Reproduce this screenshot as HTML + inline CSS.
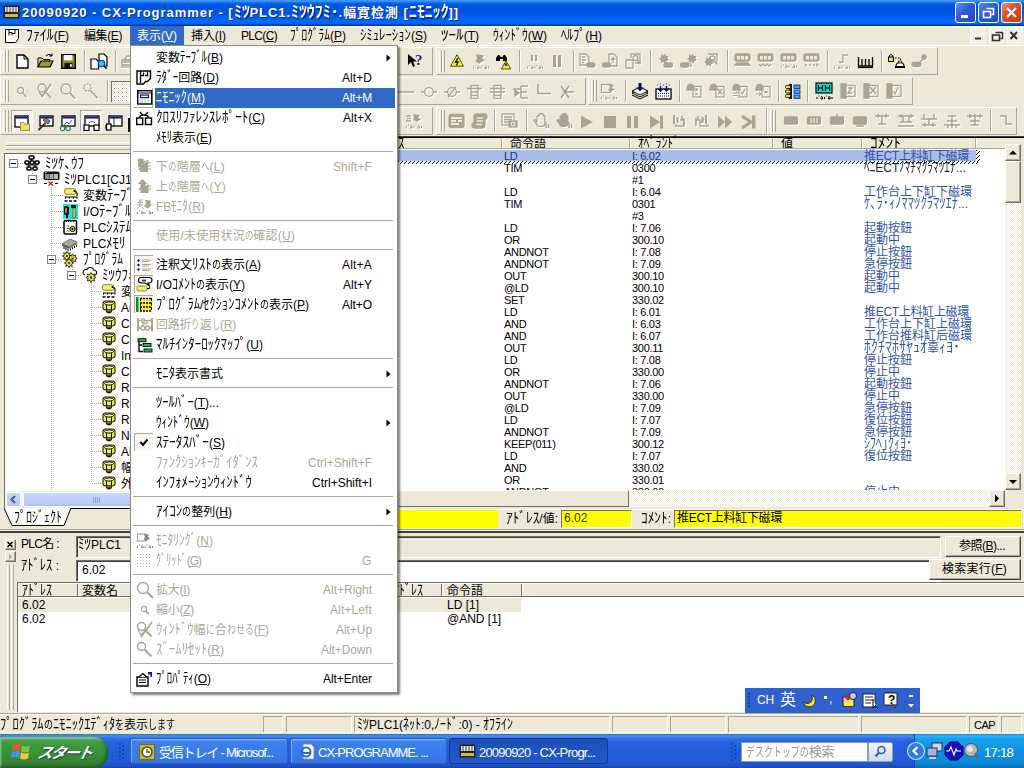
<!DOCTYPE html>
<html lang="ja"><head><meta charset="utf-8"><title>CX-Programmer</title><style>
html,body{margin:0;padding:0;}
body{width:1024px;height:768px;overflow:hidden;background:#ECE9D8;position:relative;font-family:"Liberation Sans","Noto Sans CJK JP",sans-serif;font-size:12px;color:#000;}
div,span.t,svg{position:absolute;}
span.t{white-space:nowrap;}
span.k{display:inline-block;transform-origin:0 0;letter-spacing:0;}
span.h{display:inline-block;transform-origin:0 70%;letter-spacing:0;}
u{text-decoration:underline;text-underline-offset:1px;}
</style></head><body>
<div style="left:0px;top:0px;width:1024px;height:26px;background:linear-gradient(to bottom,#3E96FF 0%,#3a92ff 5%,#1D74EE 9%,#0A5FE2 13%,#0055E0 20%,#0056E4 50%,#0159EA 60%,#0361F7 72%,#0468FB 82%,#0566F6 90%,#0350D8 94%,#0039B0 97%,#002E9C 100%);"></div>
<span id="t0" class="t" style="left:22px;top:5px;font-size:13px;line-height:15px;color:#fff;font-weight:bold;letter-spacing:0.95px;text-shadow:1px 1px 0 #0a2a8a;">20090920 - CX-Programmer - [<span class="h" style="transform:scale(1.220,1.22);margin-right:2.86px">ﾐﾂ</span>PLC1.<span class="h" style="transform:scale(1.220,1.22);margin-right:8.58px">ﾐﾂｳﾌﾐ･</span>.幅寛检測 [<span class="h" style="transform:scale(1.220,1.22);margin-right:7.15px">ﾆﾓﾆｯｸ</span>]]</span>
<svg style="left:3px;top:4px;" width="17" height="17" viewBox="0 0 17 17"><rect x="0.5" y="1.5" width="16" height="13" rx="1" fill="#222"/><rect x="2" y="3" width="13" height="5" fill="#e8e8e8"/><rect x="2" y="10" width="13" height="3" fill="#c8c040"/><path d="M4 3v5M7 3v5M10 3v5M13 3v5" stroke="#444"/></svg>
<div style="left:955px;top:2px;width:19px;height:19px;background:linear-gradient(135deg,#5a8cf0 0%,#2e5cd8 45%,#2348c0 100%);border:1px solid #fff;border-radius:3px;"></div>
<div style="left:978px;top:2px;width:19px;height:19px;background:linear-gradient(135deg,#5a8cf0 0%,#2e5cd8 45%,#2348c0 100%);border:1px solid #fff;border-radius:3px;"></div>
<div style="left:1001px;top:2px;width:19px;height:19px;background:linear-gradient(135deg,#e9956f 0%,#d8532a 40%,#c63a12 100%);border:1px solid #fff;border-radius:3px;"></div>
<div style="left:961px;top:15px;width:7px;height:3px;background:#fff;"></div>
<svg style="left:978px;top:2px;" width="21" height="21" viewBox="0 0 21 21"><path d="M8.5 6.5h7v6h-2" fill="none" stroke="#fff" stroke-width="1.6"/><rect x="5.5" y="9.5" width="7" height="6" fill="none" stroke="#fff" stroke-width="1.6"/></svg>
<svg style="left:1001px;top:2px;" width="21" height="21" viewBox="0 0 21 21"><path d="M6 6l9 9M15 6l-9 9" stroke="#fff" stroke-width="2.2"/></svg>
<div style="left:0px;top:26px;width:1024px;height:20px;background:#ECE9D8;"></div>
<div style="left:0px;top:26px;width:1024px;height:1px;background:#fff;"></div>
<div style="left:0px;top:45px;width:1024px;height:1px;background:#fff;"></div>
<svg style="left:4px;top:28px;" width="16" height="16" viewBox="0 0 16 16"><path d="M1.5 1.5h13v9l-3 4h-10z" fill="#fff" stroke="#000"/><path d="M5 1.5v6M5 4.5h3v3M11 1.5v4h-3" fill="none" stroke="#000"/></svg>
<div style="left:130px;top:26px;width:54px;height:19px;background:#316AC5;"></div>
<span id="t1" class="t" style="left:26px;top:29px;font-size:12px;line-height:14px;"><span class="h" style="transform:scale(1.152,1.22);margin-right:3.65px">ﾌｧｲﾙ</span>(<u>F</u>)</span>
<span id="t2" class="t" style="left:84px;top:29px;font-size:12px;line-height:14px;letter-spacing:-0.40px;">編集(<u>E</u>)</span>
<span id="t3" class="t" style="left:137px;top:29px;font-size:12px;line-height:14px;color:#fff;">表示(<u>V</u>)</span>
<span id="t4" class="t" style="left:191px;top:29px;font-size:12px;line-height:14px;letter-spacing:-0.07px;">挿入(<u>I</u>)</span>
<span id="t5" class="t" style="left:241px;top:29px;font-size:12px;line-height:14px;letter-spacing:-0.67px;">PLC(<u>C</u>)</span>
<span id="t6" class="t" style="left:290px;top:29px;font-size:12px;line-height:14px;"><span class="h" style="transform:scale(0.952,1.22);margin-right:-2.02px">ﾌﾟﾛｸﾞﾗﾑ</span>(<u>P</u>)</span>
<span id="t7" class="t" style="left:360px;top:29px;font-size:12px;line-height:14px;"><span class="h" style="transform:scale(1.062,1.22);margin-right:2.98px">ｼﾐｭﾚｰｼｮﾝ</span>(<u>S</u>)</span>
<span id="t8" class="t" style="left:441px;top:29px;font-size:12px;line-height:14px;"><span class="h" style="transform:scale(1.258,1.22);margin-right:4.64px">ﾂｰﾙ</span>(<u>T</u>)</span>
<span id="t9" class="t" style="left:493px;top:29px;font-size:12px;line-height:14px;"><span class="h" style="transform:scale(0.963,1.22);margin-right:-1.33px">ｳｨﾝﾄﾞｳ</span>(<u>W</u>)</span>
<span id="t10" class="t" style="left:561px;top:29px;font-size:12px;line-height:14px;"><span class="h" style="transform:scale(1.013,1.22);margin-right:0.31px">ﾍﾙﾌﾟ</span>(<u>H</u>)</span>
<div style="left:970px;top:27px;width:16px;height:17px;background:#F3F1E7;border-top:1px solid #fbfaf6;border-left:1px solid #fbfaf6;box-sizing:border-box;"></div>
<div style="left:989px;top:27px;width:16px;height:17px;background:#F3F1E7;border-top:1px solid #fbfaf6;border-left:1px solid #fbfaf6;box-sizing:border-box;"></div>
<div style="left:1007px;top:27px;width:16px;height:17px;background:#F3F1E7;border-top:1px solid #fbfaf6;border-left:1px solid #fbfaf6;box-sizing:border-box;"></div>
<svg style="left:968px;top:27px;" width="56" height="18" viewBox="0 0 56 18"><path d="M7 11.5h6" stroke="#333" stroke-width="2"/><path d="M27.500 5.500h7v6h-2" fill="none" stroke="#333" stroke-width="1.4"/><rect x="24.500" y="8" width="7" height="5.500" fill="none" stroke="#333" stroke-width="1.6"/><path d="M42.500 5l6.500 7M49 5l-6.500 7" stroke="#333" stroke-width="2"/></svg>
<div style="left:0px;top:46px;width:1024px;height:90px;background:#ECE9D8;"></div>
<div style="left:0px;top:47px;width:433px;height:28px;border-top:1px solid #fff;border-left:1px solid #fff;border-bottom:1px solid #ACA899;border-right:1px solid #ACA899;box-sizing:border-box;"></div>
<div style="left:3px;top:50px;width:3px;height:22px;border-left:1px solid #fff;border-right:1px solid #ACA899;box-sizing:border-box;"></div>
<div style="left:6px;top:50px;width:3px;height:22px;border-left:1px solid #fff;border-right:1px solid #ACA899;box-sizing:border-box;"></div>
<div style="left:436px;top:47px;width:502px;height:28px;border-top:1px solid #fff;border-left:1px solid #fff;border-bottom:1px solid #ACA899;border-right:1px solid #ACA899;box-sizing:border-box;"></div>
<div style="left:439px;top:50px;width:3px;height:22px;border-left:1px solid #fff;border-right:1px solid #ACA899;box-sizing:border-box;"></div>
<div style="left:442px;top:50px;width:3px;height:22px;border-left:1px solid #fff;border-right:1px solid #ACA899;box-sizing:border-box;"></div>
<div style="left:0px;top:77px;width:586px;height:28px;border-top:1px solid #fff;border-left:1px solid #fff;border-bottom:1px solid #ACA899;border-right:1px solid #ACA899;box-sizing:border-box;"></div>
<div style="left:3px;top:80px;width:3px;height:22px;border-left:1px solid #fff;border-right:1px solid #ACA899;box-sizing:border-box;"></div>
<div style="left:6px;top:80px;width:3px;height:22px;border-left:1px solid #fff;border-right:1px solid #ACA899;box-sizing:border-box;"></div>
<div style="left:588px;top:77px;width:325px;height:28px;border-top:1px solid #fff;border-left:1px solid #fff;border-bottom:1px solid #ACA899;border-right:1px solid #ACA899;box-sizing:border-box;"></div>
<div style="left:591px;top:80px;width:3px;height:22px;border-left:1px solid #fff;border-right:1px solid #ACA899;box-sizing:border-box;"></div>
<div style="left:594px;top:80px;width:3px;height:22px;border-left:1px solid #fff;border-right:1px solid #ACA899;box-sizing:border-box;"></div>
<div style="left:0px;top:107px;width:433px;height:28px;border-top:1px solid #fff;border-left:1px solid #fff;border-bottom:1px solid #ACA899;border-right:1px solid #ACA899;box-sizing:border-box;"></div>
<div style="left:3px;top:110px;width:3px;height:22px;border-left:1px solid #fff;border-right:1px solid #ACA899;box-sizing:border-box;"></div>
<div style="left:6px;top:110px;width:3px;height:22px;border-left:1px solid #fff;border-right:1px solid #ACA899;box-sizing:border-box;"></div>
<div style="left:436px;top:107px;width:331px;height:28px;border-top:1px solid #fff;border-left:1px solid #fff;border-bottom:1px solid #ACA899;border-right:1px solid #ACA899;box-sizing:border-box;"></div>
<div style="left:439px;top:110px;width:3px;height:22px;border-left:1px solid #fff;border-right:1px solid #ACA899;box-sizing:border-box;"></div>
<div style="left:442px;top:110px;width:3px;height:22px;border-left:1px solid #fff;border-right:1px solid #ACA899;box-sizing:border-box;"></div>
<div style="left:767px;top:107px;width:250px;height:28px;border-top:1px solid #fff;border-left:1px solid #fff;border-bottom:1px solid #ACA899;border-right:1px solid #ACA899;box-sizing:border-box;"></div>
<div style="left:770px;top:110px;width:3px;height:22px;border-left:1px solid #fff;border-right:1px solid #ACA899;box-sizing:border-box;"></div>
<div style="left:773px;top:110px;width:3px;height:22px;border-left:1px solid #fff;border-right:1px solid #ACA899;box-sizing:border-box;"></div>
<div style="left:0px;top:136px;width:400px;height:397px;background:#ECE9D8;"></div>
<div style="left:6px;top:142px;width:392px;height:2px;border-top:1px solid #fff;border-bottom:1px solid #ACA899;"></div>
<div style="left:6px;top:146px;width:392px;height:2px;border-top:1px solid #fff;border-bottom:1px solid #ACA899;"></div>
<div style="left:4px;top:153px;width:396px;height:355px;background:#fff;border-top:1px solid #716F64;border-left:1px solid #716F64;box-sizing:border-box;"></div>
<div style="left:32px;top:171px;width:1px;height:8px;background:repeating-linear-gradient(to bottom,#aaa 0 1px,transparent 1px 2px);"></div>
<div style="left:51px;top:187px;width:1px;height:68px;background:repeating-linear-gradient(to bottom,#aaa 0 1px,transparent 1px 2px);"></div>
<div style="left:51px;top:265px;width:1px;height:225px;background:repeating-linear-gradient(to bottom,#aaa 0 1px,transparent 1px 2px);"></div>
<div style="left:72px;top:267px;width:1px;height:8px;background:repeating-linear-gradient(to bottom,#aaa 0 1px,transparent 1px 2px);"></div>
<div style="left:91px;top:283px;width:1px;height:200px;background:repeating-linear-gradient(to bottom,#aaa 0 1px,transparent 1px 2px);"></div>
<div style="left:9px;top:159px;width:9px;height:9px;background:#fff;border:1px solid #848484;box-sizing:border-box;"></div>
<div style="left:11px;top:163px;width:5px;height:1px;background:#000;"></div>
<div style="left:18px;top:163px;width:6px;height:1px;background:repeating-linear-gradient(to right,#aaa 0 1px,transparent 1px 2px);"></div>
<div style="left:28px;top:175px;width:9px;height:9px;background:#fff;border:1px solid #848484;box-sizing:border-box;"></div>
<div style="left:30px;top:179px;width:5px;height:1px;background:#000;"></div>
<div style="left:37px;top:179px;width:6px;height:1px;background:repeating-linear-gradient(to right,#aaa 0 1px,transparent 1px 2px);"></div>
<div style="left:47px;top:255px;width:9px;height:9px;background:#fff;border:1px solid #848484;box-sizing:border-box;"></div>
<div style="left:49px;top:259px;width:5px;height:1px;background:#000;"></div>
<div style="left:56px;top:259px;width:6px;height:1px;background:repeating-linear-gradient(to right,#aaa 0 1px,transparent 1px 2px);"></div>
<div style="left:67px;top:271px;width:9px;height:9px;background:#fff;border:1px solid #848484;box-sizing:border-box;"></div>
<div style="left:69px;top:275px;width:5px;height:1px;background:#000;"></div>
<div style="left:76px;top:275px;width:6px;height:1px;background:repeating-linear-gradient(to right,#aaa 0 1px,transparent 1px 2px);"></div>
<div style="left:52px;top:195px;width:11px;height:1px;background:repeating-linear-gradient(to right,#aaa 0 1px,transparent 1px 2px);"></div>
<div style="left:52px;top:211px;width:11px;height:1px;background:repeating-linear-gradient(to right,#aaa 0 1px,transparent 1px 2px);"></div>
<div style="left:52px;top:227px;width:11px;height:1px;background:repeating-linear-gradient(to right,#aaa 0 1px,transparent 1px 2px);"></div>
<div style="left:52px;top:243px;width:11px;height:1px;background:repeating-linear-gradient(to right,#aaa 0 1px,transparent 1px 2px);"></div>
<div style="left:92px;top:291px;width:9px;height:1px;background:repeating-linear-gradient(to right,#aaa 0 1px,transparent 1px 2px);"></div>
<div style="left:92px;top:307px;width:9px;height:1px;background:repeating-linear-gradient(to right,#aaa 0 1px,transparent 1px 2px);"></div>
<div style="left:92px;top:323px;width:9px;height:1px;background:repeating-linear-gradient(to right,#aaa 0 1px,transparent 1px 2px);"></div>
<div style="left:92px;top:339px;width:9px;height:1px;background:repeating-linear-gradient(to right,#aaa 0 1px,transparent 1px 2px);"></div>
<div style="left:92px;top:355px;width:9px;height:1px;background:repeating-linear-gradient(to right,#aaa 0 1px,transparent 1px 2px);"></div>
<div style="left:92px;top:371px;width:9px;height:1px;background:repeating-linear-gradient(to right,#aaa 0 1px,transparent 1px 2px);"></div>
<div style="left:92px;top:387px;width:9px;height:1px;background:repeating-linear-gradient(to right,#aaa 0 1px,transparent 1px 2px);"></div>
<div style="left:92px;top:403px;width:9px;height:1px;background:repeating-linear-gradient(to right,#aaa 0 1px,transparent 1px 2px);"></div>
<div style="left:92px;top:419px;width:9px;height:1px;background:repeating-linear-gradient(to right,#aaa 0 1px,transparent 1px 2px);"></div>
<div style="left:92px;top:435px;width:9px;height:1px;background:repeating-linear-gradient(to right,#aaa 0 1px,transparent 1px 2px);"></div>
<div style="left:92px;top:451px;width:9px;height:1px;background:repeating-linear-gradient(to right,#aaa 0 1px,transparent 1px 2px);"></div>
<div style="left:92px;top:467px;width:9px;height:1px;background:repeating-linear-gradient(to right,#aaa 0 1px,transparent 1px 2px);"></div>
<div style="left:92px;top:483px;width:9px;height:1px;background:repeating-linear-gradient(to right,#aaa 0 1px,transparent 1px 2px);"></div>
<span id="t11" class="t" style="left:45px;top:157px;font-size:12px;line-height:14px;"><span class="h" style="transform:scale(1.080,1.22);margin-right:2.88px">ﾐﾂｹ､ｳﾌ</span></span>
<span id="t12" class="t" style="left:64px;top:173px;font-size:12px;line-height:14px;"><span class="h" style="transform:scale(1.080,1.22);margin-right:0.96px">ﾐﾂ</span>PLC1[CJ1M] <span class="h" style="transform:scale(1.080,1.22);margin-right:2.40px">ｵﾌﾗｲﾝ</span></span>
<span id="t13" class="t" style="left:83px;top:189px;font-size:12px;line-height:14px;">変数<span class="h" style="transform:scale(1.080,1.22);margin-right:2.40px">ﾃｰﾌﾞﾙ</span></span>
<span id="t14" class="t" style="left:83px;top:205px;font-size:12px;line-height:14px;">I/O<span class="h" style="transform:scale(1.080,1.22);margin-right:2.40px">ﾃｰﾌﾞﾙ</span></span>
<span id="t15" class="t" style="left:83px;top:221px;font-size:12px;line-height:14px;">PLC<span class="h" style="transform:scale(1.080,1.22);margin-right:1.92px">ｼｽﾃﾑ</span>設定</span>
<span id="t16" class="t" style="left:83px;top:237px;font-size:12px;line-height:14px;">PLC<span class="h" style="transform:scale(1.080,1.22);margin-right:1.44px">ﾒﾓﾘ</span></span>
<span id="t17" class="t" style="left:83px;top:253px;font-size:12px;line-height:14px;"><span class="h" style="transform:scale(0.952,1.22);margin-right:-2.02px">ﾌﾟﾛｸﾞﾗﾑ</span></span>
<span id="t18" class="t" style="left:102px;top:269px;font-size:12px;line-height:14px;"><span class="h" style="transform:scale(1.080,1.22);margin-right:2.88px">ﾐﾂｳﾌﾐ･</span></span>
<span id="t19" class="t" style="left:121px;top:285px;font-size:12px;line-height:14px;">変数<span class="h" style="transform:scale(1.080,1.22);margin-right:2.40px">ﾃｰﾌﾞﾙ</span></span>
<span id="t20" class="t" style="left:121px;top:301px;font-size:12px;line-height:14px;">Auto</span>
<span id="t21" class="t" style="left:121px;top:317px;font-size:12px;line-height:14px;">Cal</span>
<span id="t22" class="t" style="left:121px;top:333px;font-size:12px;line-height:14px;">Chk</span>
<span id="t23" class="t" style="left:121px;top:349px;font-size:12px;line-height:14px;">Init</span>
<span id="t24" class="t" style="left:121px;top:365px;font-size:12px;line-height:14px;">Clr</span>
<span id="t25" class="t" style="left:121px;top:381px;font-size:12px;line-height:14px;">Run1</span>
<span id="t26" class="t" style="left:121px;top:397px;font-size:12px;line-height:14px;">Run2</span>
<span id="t27" class="t" style="left:121px;top:413px;font-size:12px;line-height:14px;">Rst</span>
<span id="t28" class="t" style="left:121px;top:429px;font-size:12px;line-height:14px;">NG</span>
<span id="t29" class="t" style="left:121px;top:445px;font-size:12px;line-height:14px;">Alarm</span>
<span id="t30" class="t" style="left:121px;top:461px;font-size:12px;line-height:14px;">幅寛检測</span>
<span id="t31" class="t" style="left:121px;top:477px;font-size:12px;line-height:14px;">外部</span>
<div style="left:5px;top:491px;width:395px;height:17px;background:#F3F1EC;"></div>
<div style="left:6px;top:492px;width:15px;height:15px;background:linear-gradient(#c8d6fb,#b4c8f6);border:1px solid #fff;border-radius:2px;box-sizing:border-box;"></div>
<svg style="left:6px;top:492px;" width="15" height="15" viewBox="0 0 15 15"><path d="M9 4L5.500 7.500L9 11" fill="none" stroke="#4D6185" stroke-width="2"/></svg>
<div style="left:23px;top:492px;width:300px;height:15px;background:linear-gradient(#c9d7fc,#b9cbf8 80%,#a9bdf0);border:1px solid #fff;border-radius:2px;box-sizing:border-box;"></div>
<div style="left:93px;top:497px;width:1px;height:6px;background:#8fa6dc;"></div>
<div style="left:95px;top:497px;width:1px;height:6px;background:#8fa6dc;"></div>
<div style="left:97px;top:497px;width:1px;height:6px;background:#8fa6dc;"></div>
<div style="left:99px;top:497px;width:1px;height:6px;background:#8fa6dc;"></div>
<div style="left:4px;top:508px;width:396px;height:1px;background:#000;"></div>
<svg style="left:4px;top:508px;" width="80" height="19" viewBox="0 0 80 19"><path d="M0 0L8 17.500H60L67 0" fill="#fff" stroke="#000"/><path d="M1 0H66" stroke="#fff" stroke-width="2"/></svg>
<span id="t32" class="t" style="left:14px;top:511px;font-size:12px;line-height:14px;"><span class="h" style="transform:scale(1.000,1.22);margin-right:0.00px">ﾌﾟﾛｼﾞｪｸﾄ</span></span>
<div style="left:398px;top:136px;width:626px;height:1px;background:#404040;"></div>
<div style="left:398px;top:137px;width:626px;height:1px;background:#000;"></div>
<div style="left:398px;top:138px;width:607px;height:11px;background:#ECE9D8;"></div>
<div style="left:398px;top:149px;width:607px;height:341px;background:#fff;"></div>
<span id="t33" class="t" style="left:398px;top:137px;font-size:12px;line-height:14px;"><span class="h" style="transform:scale(1.080,1.22);margin-right:0.48px">ｽ</span></span>
<span id="t34" class="t" style="left:510px;top:137px;font-size:12px;line-height:14px;">命令語</span>
<span id="t35" class="t" style="left:638px;top:137px;font-size:12px;line-height:14px;"><span class="h" style="transform:scale(0.976,1.22);margin-right:-1.01px">ｵﾍﾟﾗﾝﾄﾞ</span></span>
<span id="t36" class="t" style="left:781px;top:137px;font-size:12px;line-height:14px;">値</span>
<span id="t37" class="t" style="left:870px;top:137px;font-size:12px;line-height:14px;"><span class="h" style="transform:scale(1.291,1.22);margin-right:6.98px">ｺﾒﾝﾄ</span></span>
<div style="left:501px;top:138px;width:1px;height:10px;background:#ACA899;"></div>
<div style="left:502px;top:138px;width:1px;height:10px;background:#fff;"></div>
<div style="left:629px;top:138px;width:1px;height:10px;background:#ACA899;"></div>
<div style="left:630px;top:138px;width:1px;height:10px;background:#fff;"></div>
<div style="left:772px;top:138px;width:1px;height:10px;background:#ACA899;"></div>
<div style="left:773px;top:138px;width:1px;height:10px;background:#fff;"></div>
<div style="left:861px;top:138px;width:1px;height:10px;background:#ACA899;"></div>
<div style="left:862px;top:138px;width:1px;height:10px;background:#fff;"></div>
<div style="left:975px;top:138px;width:1px;height:10px;background:#ACA899;"></div>
<div style="left:976px;top:138px;width:1px;height:10px;background:#fff;"></div>
<div style="left:398px;top:148px;width:607px;height:1px;background:#ACA899;"></div>
<div style="left:398px;top:150px;width:578px;height:11px;background:#A9BCEB;"></div>
<div style="left:398px;top:161px;width:582px;height:3px;background:repeating-linear-gradient(135deg,#000 0 1.1px,#fff 1.1px 2.83px);"></div>
<div style="left:976px;top:150px;width:4px;height:12px;background:repeating-linear-gradient(135deg,#000 0 1.1px,#fff 1.1px 2.83px);"></div>
<span id="t38" class="t" style="left:504px;top:150px;font-size:11px;line-height:13px;color:#1c2f7a;line-height:13px;letter-spacing:-0.3px;">LD</span>
<span id="t39" class="t" style="left:632px;top:150px;font-size:11px;line-height:13px;color:#1c2f7a;line-height:13px;letter-spacing:-0.3px;">I: 6.02</span>
<span id="t40" class="t" style="left:864px;top:150px;font-size:12px;line-height:14px;color:#3355A8;letter-spacing:-0.30px;line-height:13px;">推ECT上料缸下磁環</span>
<span id="t41" class="t" style="left:504px;top:162px;font-size:11px;line-height:13px;line-height:13px;letter-spacing:-0.3px;">TIM</span>
<span id="t42" class="t" style="left:632px;top:162px;font-size:11px;line-height:13px;line-height:13px;letter-spacing:-0.3px;">0300</span>
<span id="t43" class="t" style="left:864px;top:162px;font-size:12px;line-height:14px;color:#222;line-height:13px;"><span class="h" style="transform:scale(0.944,1.22);margin-right:-0.67px">ﾍﾆ</span>ECT<span class="h" style="transform:scale(0.944,1.22);margin-right:-3.36px">ﾉﾏﾁﾏｸﾗﾏﾂｴﾅ</span>...</span>
<span id="t44" class="t" style="left:632px;top:174px;font-size:11px;line-height:13px;line-height:13px;letter-spacing:-0.3px;">#1</span>
<span id="t45" class="t" style="left:504px;top:186px;font-size:11px;line-height:13px;line-height:13px;letter-spacing:-0.3px;">LD</span>
<span id="t46" class="t" style="left:632px;top:186px;font-size:11px;line-height:13px;line-height:13px;letter-spacing:-0.3px;">I: 6.04</span>
<span id="t47" class="t" style="left:864px;top:186px;font-size:12px;line-height:14px;color:#3355A8;line-height:13px;">工作台上下缸下磁環</span>
<span id="t48" class="t" style="left:504px;top:198px;font-size:11px;line-height:13px;line-height:13px;letter-spacing:-0.3px;">TIM</span>
<span id="t49" class="t" style="left:632px;top:198px;font-size:11px;line-height:13px;line-height:13px;letter-spacing:-0.3px;">0301</span>
<span id="t50" class="t" style="left:864px;top:198px;font-size:12px;line-height:14px;color:#3355A8;line-height:13px;"><span class="h" style="transform:scale(1.044,1.22);margin-right:3.96px">ｹ､ﾗ･ｨﾉﾏﾏﾂｸﾗﾏﾂｴﾅ</span>...</span>
<span id="t51" class="t" style="left:632px;top:210px;font-size:11px;line-height:13px;line-height:13px;letter-spacing:-0.3px;">#3</span>
<span id="t52" class="t" style="left:504px;top:222px;font-size:11px;line-height:13px;line-height:13px;letter-spacing:-0.3px;">LD</span>
<span id="t53" class="t" style="left:632px;top:222px;font-size:11px;line-height:13px;line-height:13px;letter-spacing:-0.3px;">I: 7.06</span>
<span id="t54" class="t" style="left:864px;top:222px;font-size:12px;line-height:14px;color:#3355A8;line-height:13px;">起動按鈕</span>
<span id="t55" class="t" style="left:504px;top:234px;font-size:11px;line-height:13px;line-height:13px;letter-spacing:-0.3px;">OR</span>
<span id="t56" class="t" style="left:632px;top:234px;font-size:11px;line-height:13px;line-height:13px;letter-spacing:-0.3px;">300.10</span>
<span id="t57" class="t" style="left:864px;top:234px;font-size:12px;line-height:14px;color:#3355A8;letter-spacing:-0.01px;line-height:13px;">起動中</span>
<span id="t58" class="t" style="left:504px;top:246px;font-size:11px;line-height:13px;line-height:13px;letter-spacing:-0.3px;">ANDNOT</span>
<span id="t59" class="t" style="left:632px;top:246px;font-size:11px;line-height:13px;line-height:13px;letter-spacing:-0.3px;">I: 7.08</span>
<span id="t60" class="t" style="left:864px;top:246px;font-size:12px;line-height:14px;color:#3355A8;line-height:13px;">停止按鈕</span>
<span id="t61" class="t" style="left:504px;top:258px;font-size:11px;line-height:13px;line-height:13px;letter-spacing:-0.3px;">ANDNOT</span>
<span id="t62" class="t" style="left:632px;top:258px;font-size:11px;line-height:13px;line-height:13px;letter-spacing:-0.3px;">I: 7.09</span>
<span id="t63" class="t" style="left:864px;top:258px;font-size:12px;line-height:14px;color:#3355A8;line-height:13px;">急停按鈕</span>
<span id="t64" class="t" style="left:504px;top:270px;font-size:11px;line-height:13px;line-height:13px;letter-spacing:-0.3px;">OUT</span>
<span id="t65" class="t" style="left:632px;top:270px;font-size:11px;line-height:13px;line-height:13px;letter-spacing:-0.3px;">300.10</span>
<span id="t66" class="t" style="left:864px;top:270px;font-size:12px;line-height:14px;color:#3355A8;letter-spacing:-0.01px;line-height:13px;">起動中</span>
<span id="t67" class="t" style="left:504px;top:282px;font-size:11px;line-height:13px;line-height:13px;letter-spacing:-0.3px;">@LD</span>
<span id="t68" class="t" style="left:632px;top:282px;font-size:11px;line-height:13px;line-height:13px;letter-spacing:-0.3px;">300.10</span>
<span id="t69" class="t" style="left:864px;top:282px;font-size:12px;line-height:14px;color:#3355A8;letter-spacing:-0.01px;line-height:13px;">起動中</span>
<span id="t70" class="t" style="left:504px;top:294px;font-size:11px;line-height:13px;line-height:13px;letter-spacing:-0.3px;">SET</span>
<span id="t71" class="t" style="left:632px;top:294px;font-size:11px;line-height:13px;line-height:13px;letter-spacing:-0.3px;">330.02</span>
<span id="t72" class="t" style="left:504px;top:306px;font-size:11px;line-height:13px;line-height:13px;letter-spacing:-0.3px;">LD</span>
<span id="t73" class="t" style="left:632px;top:306px;font-size:11px;line-height:13px;line-height:13px;letter-spacing:-0.3px;">I: 6.01</span>
<span id="t74" class="t" style="left:864px;top:306px;font-size:12px;line-height:14px;color:#3355A8;letter-spacing:-0.30px;line-height:13px;">推ECT上料缸上磁環</span>
<span id="t75" class="t" style="left:504px;top:318px;font-size:11px;line-height:13px;line-height:13px;letter-spacing:-0.3px;">AND</span>
<span id="t76" class="t" style="left:632px;top:318px;font-size:11px;line-height:13px;line-height:13px;letter-spacing:-0.3px;">I: 6.03</span>
<span id="t77" class="t" style="left:864px;top:318px;font-size:12px;line-height:14px;color:#3355A8;line-height:13px;">工作台上下缸上磁環</span>
<span id="t78" class="t" style="left:504px;top:330px;font-size:11px;line-height:13px;line-height:13px;letter-spacing:-0.3px;">AND</span>
<span id="t79" class="t" style="left:632px;top:330px;font-size:11px;line-height:13px;line-height:13px;letter-spacing:-0.3px;">I: 6.07</span>
<span id="t80" class="t" style="left:864px;top:330px;font-size:12px;line-height:14px;color:#3355A8;line-height:13px;">工作台推料缸后磁環</span>
<span id="t81" class="t" style="left:504px;top:342px;font-size:11px;line-height:13px;line-height:13px;letter-spacing:-0.3px;">OUT</span>
<span id="t82" class="t" style="left:632px;top:342px;font-size:11px;line-height:13px;line-height:13px;letter-spacing:-0.3px;">300.11</span>
<span id="t83" class="t" style="left:864px;top:342px;font-size:12px;line-height:14px;color:#3355A8;line-height:13px;"><span class="h" style="transform:scale(1.166,1.22);margin-right:8.96px">ﾎｸﾁﾏﾎｻﾔｭｵ</span>辜<span class="h" style="transform:scale(1.166,1.22);margin-right:2.99px">ｨﾖ･</span></span>
<span id="t84" class="t" style="left:504px;top:354px;font-size:11px;line-height:13px;line-height:13px;letter-spacing:-0.3px;">LD</span>
<span id="t85" class="t" style="left:632px;top:354px;font-size:11px;line-height:13px;line-height:13px;letter-spacing:-0.3px;">I: 7.08</span>
<span id="t86" class="t" style="left:864px;top:354px;font-size:12px;line-height:14px;color:#3355A8;line-height:13px;">停止按鈕</span>
<span id="t87" class="t" style="left:504px;top:366px;font-size:11px;line-height:13px;line-height:13px;letter-spacing:-0.3px;">OR</span>
<span id="t88" class="t" style="left:632px;top:366px;font-size:11px;line-height:13px;line-height:13px;letter-spacing:-0.3px;">330.00</span>
<span id="t89" class="t" style="left:864px;top:366px;font-size:12px;line-height:14px;color:#3355A8;letter-spacing:-0.01px;line-height:13px;">停止中</span>
<span id="t90" class="t" style="left:504px;top:378px;font-size:11px;line-height:13px;line-height:13px;letter-spacing:-0.3px;">ANDNOT</span>
<span id="t91" class="t" style="left:632px;top:378px;font-size:11px;line-height:13px;line-height:13px;letter-spacing:-0.3px;">I: 7.06</span>
<span id="t92" class="t" style="left:864px;top:378px;font-size:12px;line-height:14px;color:#3355A8;line-height:13px;">起動按鈕</span>
<span id="t93" class="t" style="left:504px;top:390px;font-size:11px;line-height:13px;line-height:13px;letter-spacing:-0.3px;">OUT</span>
<span id="t94" class="t" style="left:632px;top:390px;font-size:11px;line-height:13px;line-height:13px;letter-spacing:-0.3px;">330.00</span>
<span id="t95" class="t" style="left:864px;top:390px;font-size:12px;line-height:14px;color:#3355A8;letter-spacing:-0.01px;line-height:13px;">停止中</span>
<span id="t96" class="t" style="left:504px;top:402px;font-size:11px;line-height:13px;line-height:13px;letter-spacing:-0.3px;">@LD</span>
<span id="t97" class="t" style="left:632px;top:402px;font-size:11px;line-height:13px;line-height:13px;letter-spacing:-0.3px;">I: 7.09</span>
<span id="t98" class="t" style="left:864px;top:402px;font-size:12px;line-height:14px;color:#3355A8;line-height:13px;">急停按鈕</span>
<span id="t99" class="t" style="left:504px;top:414px;font-size:11px;line-height:13px;line-height:13px;letter-spacing:-0.3px;">LD</span>
<span id="t100" class="t" style="left:632px;top:414px;font-size:11px;line-height:13px;line-height:13px;letter-spacing:-0.3px;">I: 7.07</span>
<span id="t101" class="t" style="left:864px;top:414px;font-size:12px;line-height:14px;color:#3355A8;line-height:13px;">復位按鈕</span>
<span id="t102" class="t" style="left:504px;top:426px;font-size:11px;line-height:13px;line-height:13px;letter-spacing:-0.3px;">ANDNOT</span>
<span id="t103" class="t" style="left:632px;top:426px;font-size:11px;line-height:13px;line-height:13px;letter-spacing:-0.3px;">I: 7.09</span>
<span id="t104" class="t" style="left:864px;top:426px;font-size:12px;line-height:14px;color:#3355A8;line-height:13px;">急停按鈕</span>
<span id="t105" class="t" style="left:504px;top:438px;font-size:11px;line-height:13px;line-height:13px;letter-spacing:-0.3px;">KEEP(011)</span>
<span id="t106" class="t" style="left:632px;top:438px;font-size:11px;line-height:13px;line-height:13px;letter-spacing:-0.3px;">300.12</span>
<span id="t107" class="t" style="left:864px;top:438px;font-size:12px;line-height:14px;color:#3355A8;line-height:13px;"><span class="h" style="transform:scale(1.000,1.22);margin-right:0.00px">ｼﾌﾍ｣ｸｨﾖ･</span></span>
<span id="t108" class="t" style="left:504px;top:450px;font-size:11px;line-height:13px;line-height:13px;letter-spacing:-0.3px;">LD</span>
<span id="t109" class="t" style="left:632px;top:450px;font-size:11px;line-height:13px;line-height:13px;letter-spacing:-0.3px;">I: 7.07</span>
<span id="t110" class="t" style="left:864px;top:450px;font-size:12px;line-height:14px;color:#3355A8;line-height:13px;">復位按鈕</span>
<span id="t111" class="t" style="left:504px;top:462px;font-size:11px;line-height:13px;line-height:13px;letter-spacing:-0.3px;">AND</span>
<span id="t112" class="t" style="left:632px;top:462px;font-size:11px;line-height:13px;line-height:13px;letter-spacing:-0.3px;">330.02</span>
<span id="t113" class="t" style="left:504px;top:474px;font-size:11px;line-height:13px;line-height:13px;letter-spacing:-0.3px;">OR</span>
<span id="t114" class="t" style="left:632px;top:474px;font-size:11px;line-height:13px;line-height:13px;letter-spacing:-0.3px;">330.01</span>
<span id="t115" class="t" style="left:504px;top:486px;font-size:11px;line-height:13px;line-height:13px;letter-spacing:-0.3px;">ANDNOT</span>
<span id="t116" class="t" style="left:632px;top:486px;font-size:11px;line-height:13px;line-height:13px;letter-spacing:-0.3px;">330.00</span>
<span id="t117" class="t" style="left:864px;top:486px;font-size:12px;line-height:14px;color:#3355A8;letter-spacing:-0.01px;line-height:13px;">停止中</span>
<div style="left:398px;top:490px;width:607px;height:17px;background:repeating-conic-gradient(#fff 0 25%,#ECE9D8 0 50%) 0 0/2px 2px;"></div>
<div style="left:398px;top:490px;width:231px;height:17px;background:#ECE9D8;border-top:1px solid #fff;border-bottom:1px solid #716F64;border-right:1px solid #716F64;box-sizing:border-box;"></div>
<div style="left:989px;top:490px;width:16px;height:17px;background:#ECE9D8;border-top:1px solid #fff;border-left:1px solid #fff;border-right:1px solid #716F64;border-bottom:1px solid #716F64;box-sizing:border-box;box-shadow:inset -1px -1px 0 #ACA899;"></div>
<svg style="left:989px;top:490px;" width="16" height="17" viewBox="0 0 16 17"><path d="M6 4.500l4 4l-4 4z" fill="#000"/></svg>
<div style="left:1005px;top:490px;width:19px;height:17px;background:#ECE9D8;"></div>
<div style="left:1005px;top:138px;width:16px;height:352px;background:repeating-conic-gradient(#fff 0 25%,#ECE9D8 0 50%) 0 0/2px 2px;"></div>
<div style="left:1005px;top:138px;width:19px;height:6px;background:#ECE9D8;"></div>
<div style="left:1021px;top:138px;width:3px;height:370px;background:#ECE9D8;"></div>
<div style="left:1005px;top:144px;width:16px;height:17px;background:#ECE9D8;border-top:1px solid #fff;border-left:1px solid #fff;border-right:1px solid #716F64;border-bottom:1px solid #716F64;box-sizing:border-box;box-shadow:inset -1px -1px 0 #ACA899;"></div>
<svg style="left:1005px;top:144px;" width="16" height="17" viewBox="0 0 16 17"><path d="M4 10.500l4 -4l4 4z" fill="#000"/></svg>
<div style="left:1005px;top:161px;width:16px;height:42px;background:#ECE9D8;border-top:1px solid #fff;border-left:1px solid #fff;border-right:1px solid #716F64;border-bottom:1px solid #716F64;box-sizing:border-box;box-shadow:inset -1px -1px 0 #ACA899;"></div>
<div style="left:1005px;top:473px;width:16px;height:17px;background:#ECE9D8;border-top:1px solid #fff;border-left:1px solid #fff;border-right:1px solid #716F64;border-bottom:1px solid #716F64;box-sizing:border-box;box-shadow:inset -1px -1px 0 #ACA899;"></div>
<svg style="left:1005px;top:473px;" width="16" height="17" viewBox="0 0 16 17"><path d="M4 7l4 4l4 -4z" fill="#000"/></svg>
<div style="left:398px;top:507px;width:626px;height:26px;background:#ECE9D8;"></div>
<div style="left:398px;top:509px;width:626px;height:1px;background:#fff;"></div>
<div style="left:398px;top:510px;width:100px;height:18px;background:#FFFF00;"></div>
<div style="left:561px;top:510px;width:71px;height:18px;background:#FFFF00;border-top:1px solid #716F64;border-left:1px solid #716F64;border-bottom:1px solid #fff;border-right:1px solid #fff;box-sizing:border-box;"></div>
<div style="left:674px;top:510px;width:348px;height:18px;background:#FFFF00;border-top:1px solid #716F64;border-left:1px solid #716F64;border-bottom:1px solid #fff;border-right:1px solid #fff;box-sizing:border-box;"></div>
<span id="t118" class="t" style="left:506px;top:512px;font-size:12px;line-height:14px;"><span class="h" style="transform:scale(1.110,1.22);margin-right:3.30px">ｱﾄﾞﾚｽ</span>/値:</span>
<span id="t119" class="t" style="left:564px;top:511px;font-size:12px;line-height:14px;color:#333;">6.02</span>
<span id="t120" class="t" style="left:641px;top:512px;font-size:12px;line-height:14px;"><span class="h" style="transform:scale(1.110,1.22);margin-right:2.64px">ｺﾒﾝﾄ</span>:</span>
<span id="t121" class="t" style="left:677px;top:511px;font-size:12px;line-height:14px;letter-spacing:-0.30px;">推ECT上料缸下磁環</span>
<div style="left:0px;top:529px;width:1024px;height:1px;background:#ACA899;"></div>
<div style="left:0px;top:531px;width:1024px;height:2px;background:#404040;"></div>
<div style="left:0px;top:533px;width:1024px;height:181px;background:#ECE9D8;"></div>
<div style="left:5px;top:539px;width:11px;height:11px;background:#ECE9D8;border-top:1px solid #fff;border-left:1px solid #fff;border-right:1px solid #716F64;border-bottom:1px solid #716F64;box-sizing:border-box;box-shadow:inset -1px -1px 0 #ACA899;"></div>
<svg style="left:5px;top:539px;" width="11" height="11" viewBox="0 0 11 11"><path d="M2.500 3l5 5M7.500 3l-5 5" stroke="#000" stroke-width="1.5"/></svg>
<div style="left:5px;top:551px;width:11px;height:11px;background:#ECE9D8;border-top:1px solid #fff;border-left:1px solid #fff;border-right:1px solid #716F64;border-bottom:1px solid #716F64;box-sizing:border-box;box-shadow:inset -1px -1px 0 #ACA899;"></div>
<svg style="left:5px;top:551px;" width="11" height="11" viewBox="0 0 11 11"><path d="M4 2.500l3 3l-3 3z" fill="#ACA899"/></svg>
<div style="left:7px;top:564px;width:3px;height:146px;border-left:1px solid #fff;border-right:1px solid #ACA899;box-sizing:border-box;"></div>
<div style="left:11px;top:564px;width:3px;height:146px;border-left:1px solid #fff;border-right:1px solid #ACA899;box-sizing:border-box;"></div>
<span id="t122" class="t" style="left:21px;top:537px;font-size:12px;line-height:14px;letter-spacing:-0.67px;">PLC名 :</span>
<span id="t123" class="t" style="left:21px;top:559px;font-size:12px;line-height:14px;"><span class="h" style="transform:scale(1.044,1.22);margin-right:1.32px">ｱﾄﾞﾚｽ</span> :</span>
<div style="left:76px;top:536px;width:865px;height:22px;background:#ECE9D8;border-top:1px solid #716F64;border-left:1px solid #716F64;border-bottom:1px solid #fff;border-right:1px solid #fff;box-sizing:border-box;"></div>
<div style="left:77px;top:537px;width:863px;height:20px;border-top:1px solid #404040;border-left:1px solid #404040;box-sizing:border-box;"></div>
<span id="t124" class="t" style="left:78px;top:538px;font-size:12px;line-height:14px;"><span class="h" style="transform:scale(1.080,1.22);margin-right:0.96px">ﾐﾂ</span>PLC1</span>
<div style="left:76px;top:560px;width:865px;height:22px;background:#fff;border-top:1px solid #716F64;border-left:1px solid #716F64;border-bottom:1px solid #fff;border-right:1px solid #fff;box-sizing:border-box;"></div>
<div style="left:77px;top:561px;width:863px;height:20px;border-top:1px solid #404040;border-left:1px solid #404040;box-sizing:border-box;"></div>
<span id="t125" class="t" style="left:82px;top:563px;font-size:12px;line-height:14px;">6.02</span>
<div style="left:945px;top:536px;width:76px;height:21px;background:#ECE9D8;border-top:1px solid #fff;border-left:1px solid #fff;border-right:1px solid #404040;border-bottom:1px solid #404040;box-sizing:border-box;box-shadow:inset -1px -1px 0 #ACA899;"></div>
<div style="left:929px;top:559px;width:92px;height:21px;background:#ECE9D8;border-top:1px solid #fff;border-left:1px solid #fff;border-right:1px solid #404040;border-bottom:1px solid #404040;box-sizing:border-box;box-shadow:inset -1px -1px 0 #ACA899;"></div>
<span id="t126" class="t" style="left:959px;top:539px;font-size:12px;line-height:14px;letter-spacing:-0.50px;">参照(<u>B</u>)...</span>
<span id="t127" class="t" style="left:942px;top:562px;font-size:12px;line-height:14px;letter-spacing:0.24px;">検索実行(<u>F</u>)</span>
<div style="left:17px;top:582px;width:1007px;height:130px;background:#fff;border-top:1px solid #716F64;border-left:1px solid #716F64;box-sizing:border-box;"></div>
<div style="left:18px;top:583px;width:1006px;height:14px;background:#ECE9D8;border-bottom:1px solid #716F64;box-sizing:border-box;"></div>
<div style="left:77px;top:583px;width:1px;height:13px;background:#716F64;"></div>
<div style="left:78px;top:583px;width:1px;height:13px;background:#fff;"></div>
<div style="left:441px;top:583px;width:1px;height:13px;background:#716F64;"></div>
<div style="left:442px;top:583px;width:1px;height:13px;background:#fff;"></div>
<div style="left:521px;top:583px;width:1px;height:13px;background:#716F64;"></div>
<div style="left:522px;top:583px;width:1px;height:13px;background:#fff;"></div>
<div style="left:18px;top:583px;width:1006px;height:1px;background:#fff;"></div>
<span id="t128" class="t" style="left:22px;top:584px;font-size:12px;line-height:14px;"><span class="h" style="transform:scale(0.999,1.22);margin-right:-0.03px">ｱﾄﾞﾚｽ</span></span>
<span id="t129" class="t" style="left:82px;top:584px;font-size:12px;line-height:14px;">変数名</span>
<span id="t130" class="t" style="left:393px;top:584px;font-size:12px;line-height:14px;"><span class="h" style="transform:scale(0.999,1.22);margin-right:-0.03px">ｱﾄﾞﾚｽ</span></span>
<span id="t131" class="t" style="left:447px;top:584px;font-size:12px;line-height:14px;">命令語</span>
<div style="left:18px;top:598px;width:503px;height:14px;background:#ECE9D8;"></div>
<span id="t132" class="t" style="left:22px;top:598px;font-size:12px;line-height:14px;">6.02</span>
<span id="t133" class="t" style="left:22px;top:612px;font-size:12px;line-height:14px;">6.02</span>
<span id="t134" class="t" style="left:447px;top:598px;font-size:12px;line-height:14px;">LD [1]</span>
<span id="t135" class="t" style="left:447px;top:612px;font-size:12px;line-height:14px;">@AND [1]</span>
<div style="left:0px;top:712px;width:1024px;height:22px;background:#ECE9D8;"></div>
<div style="left:0px;top:713px;width:1024px;height:1px;background:#ACA899;"></div>
<div style="left:0px;top:714px;width:1024px;height:1px;background:#fff;"></div>
<span id="t136" class="t" style="left:0px;top:718px;font-size:12px;line-height:14px;"><span class="h" style="transform:scale(1.038,1.22);margin-right:1.60px">ﾌﾟﾛｸﾞﾗﾑ</span><span class="k" style="transform:scaleX(0.750);margin-right:-3.00px">の</span><span class="h" style="transform:scale(1.038,1.22);margin-right:2.28px">ﾆﾓﾆｯｸｴﾃﾞｨﾀ</span><span class="k" style="transform:scaleX(0.750);margin-right:-3.00px">を</span>表示<span class="k" style="transform:scaleX(0.750);margin-right:-9.00px">します</span></span>
<div style="left:263px;top:716px;width:20px;height:17px;border-top:1px solid #ACA899;border-left:1px solid #ACA899;border-bottom:1px solid #fff;border-right:1px solid #fff;box-sizing:border-box;"></div>
<div style="left:286px;top:716px;width:66px;height:17px;border-top:1px solid #ACA899;border-left:1px solid #ACA899;border-bottom:1px solid #fff;border-right:1px solid #fff;box-sizing:border-box;"></div>
<div style="left:354px;top:716px;width:256px;height:17px;border-top:1px solid #ACA899;border-left:1px solid #ACA899;border-bottom:1px solid #fff;border-right:1px solid #fff;box-sizing:border-box;"></div>
<div style="left:612px;top:716px;width:56px;height:17px;border-top:1px solid #ACA899;border-left:1px solid #ACA899;border-bottom:1px solid #fff;border-right:1px solid #fff;box-sizing:border-box;"></div>
<div style="left:670px;top:716px;width:56px;height:17px;border-top:1px solid #ACA899;border-left:1px solid #ACA899;border-bottom:1px solid #fff;border-right:1px solid #fff;box-sizing:border-box;"></div>
<div style="left:728px;top:716px;width:131px;height:17px;border-top:1px solid #ACA899;border-left:1px solid #ACA899;border-bottom:1px solid #fff;border-right:1px solid #fff;box-sizing:border-box;"></div>
<div style="left:861px;top:716px;width:106px;height:17px;border-top:1px solid #ACA899;border-left:1px solid #ACA899;border-bottom:1px solid #fff;border-right:1px solid #fff;box-sizing:border-box;"></div>
<div style="left:969px;top:716px;width:30px;height:17px;border-top:1px solid #ACA899;border-left:1px solid #ACA899;border-bottom:1px solid #fff;border-right:1px solid #fff;box-sizing:border-box;"></div>
<div style="left:1001px;top:716px;width:21px;height:17px;border-top:1px solid #ACA899;border-left:1px solid #ACA899;border-bottom:1px solid #fff;border-right:1px solid #fff;box-sizing:border-box;"></div>
<span id="t137" class="t" style="left:357px;top:718px;font-size:12px;line-height:14px;"><span class="h" style="transform:scale(0.999,1.22);margin-right:-0.01px">ﾐﾂ</span>PLC1(<span class="h" style="transform:scale(0.999,1.22);margin-right:-0.02px">ﾈｯﾄ</span>:0,<span class="h" style="transform:scale(0.999,1.22);margin-right:-0.02px">ﾉｰﾄﾞ</span>:0) - <span class="h" style="transform:scale(0.999,1.22);margin-right:-0.03px">ｵﾌﾗｲﾝ</span></span>
<span id="t138" class="t" style="left:974px;top:719px;font-size:11px;line-height:13px;letter-spacing:-0.54px;">CAP</span>
<div style="left:745px;top:688px;width:175px;height:25px;background:#2F61CF;"></div>
<div style="left:748px;top:693px;width:2px;height:2px;background:#1a3fa0;"></div>
<div style="left:748px;top:696px;width:2px;height:2px;background:#1a3fa0;"></div>
<div style="left:748px;top:699px;width:2px;height:2px;background:#1a3fa0;"></div>
<div style="left:748px;top:702px;width:2px;height:2px;background:#1a3fa0;"></div>
<div style="left:748px;top:705px;width:2px;height:2px;background:#1a3fa0;"></div>
<span id="t139" class="t" style="left:757px;top:693px;font-size:12px;line-height:14px;color:#fff;letter-spacing:-0.17px;">CH</span>
<span id="t140" class="t" style="left:780px;top:691px;font-size:16px;line-height:18px;color:#fff;">英</span>
<svg style="left:802px;top:692px;" width="16" height="16" viewBox="0 0 16 16"><g transform="translate(16,1) scale(-1,1) rotate(-20 8 8)"><path d="M9 2a6 6 0 1 0 5 9a5 5 0 0 1 -5 -9z" fill="#FFE032" stroke="#3a3000" stroke-width=".8"/></g></svg>
<div style="left:824px;top:696px;width:3px;height:3px;background:#fff;"></div>
<span id="t141" class="t" style="left:829px;top:692px;font-size:12px;line-height:14px;color:#fff;">,</span>
<svg style="left:840px;top:691px;" width="18" height="18" viewBox="0 0 18 18"><rect x="3" y="6" width="11" height="9" fill="#f0d890" stroke="#222"/><circle cx="13" cy="5" r="3.500" fill="#c8d0e8" stroke="#222"/><path d="M4 4l4 5M8 3l1 6" stroke="#c02020" stroke-width="1.500"/><rect x="4" y="12" width="9" height="3" fill="#f8f020"/></svg>
<svg style="left:862px;top:692px;" width="18" height="17" viewBox="0 0 18 17"><rect x="1" y="2" width="12" height="13" fill="#fff" stroke="#222"/><path d="M3 5h8M3 8h8M3 11h6" stroke="#222"/><path d="M11 7v9l2.500 -2.500l2 3" fill="#fff" stroke="#000"/></svg>
<svg style="left:883px;top:692px;" width="16" height="16" viewBox="0 0 16 16"><rect x="1" y="1" width="13" height="12" rx="1" fill="#fffbe0" stroke="#222"/><path d="M9 13l3 3v-3z" fill="#fffbe0" stroke="#222"/></svg>
<span id="t142" class="t" style="left:888px;top:693px;font-size:12px;line-height:14px;font-weight:bold;">?</span>
<div style="left:909px;top:695px;width:4px;height:2px;background:#fff;"></div>
<svg style="left:907px;top:703px;" width="8" height="6" viewBox="0 0 8 6"><path d="M1 1h6l-3 3.500z" fill="#fff"/></svg>
<div style="left:0px;top:734px;width:1024px;height:34px;background:linear-gradient(to bottom,#3168d5 0%,#4993e6 6%,#2f76e4 12%,#2663e0 22%,#245ddb 50%,#2259d6 80%,#1f50c4 94%,#1941a5 100%);"></div>
<div style="left:0px;top:737px;width:108px;height:31px;background:linear-gradient(to bottom,#5db45d 0%,#47a347 10%,#3c963c 30%,#388e38 60%,#357f35 85%,#2b6e2b 100%);border-radius:0 14px 14px 0;box-shadow:inset -2px -1px 3px #1f5c1f,inset 1px 2px 2px #8fd08f;"></div>
<svg style="left:11px;top:742px;" width="22" height="20" viewBox="0 0 22 20"><path d="M2 3q4 -2 8 0l-1 6q-4 -2 -8 0z" fill="#e8592c"/><path d="M11 3.500q4 2 8 0l-1 6q-4 2 -8 0z" fill="#7cc243"/><path d="M1 10q4 -2 8 0l-1 6q-4 -2 -8 0z" fill="#4f8ee8"/><path d="M10 10.500q4 2 8 0l-1 6q-4 2 -8 0z" fill="#f6c531"/></svg>
<span id="t143" class="t" style="left:38px;top:744px;font-size:15px;line-height:17px;color:#fff;font-weight:bold;letter-spacing:-1.60px;font-style:italic;transform:skewX(-12deg);text-shadow:1px 1px 1px #234;">スタート</span>
<div style="left:119px;top:743px;width:2px;height:2px;background:#1b44a8;"></div>
<div style="left:122px;top:745px;width:2px;height:2px;background:#1b44a8;"></div>
<div style="left:119px;top:747px;width:2px;height:2px;background:#1b44a8;"></div>
<div style="left:122px;top:749px;width:2px;height:2px;background:#1b44a8;"></div>
<div style="left:119px;top:751px;width:2px;height:2px;background:#1b44a8;"></div>
<div style="left:122px;top:753px;width:2px;height:2px;background:#1b44a8;"></div>
<div style="left:119px;top:755px;width:2px;height:2px;background:#1b44a8;"></div>
<div style="left:122px;top:757px;width:2px;height:2px;background:#1b44a8;"></div>
<div style="left:119px;top:759px;width:2px;height:2px;background:#1b44a8;"></div>
<div style="left:130px;top:738px;width:158px;height:26px;background:linear-gradient(#5e9cf2 0%,#3c80ee 12%,#377bea 70%,#3474e0 100%);border:1px solid #2c5fc8;border-radius:3px;box-sizing:border-box;box-shadow:inset 1px 1px 0 #7db2f8;"></div>
<div style="left:290px;top:738px;width:157px;height:26px;background:linear-gradient(#5e9cf2 0%,#3c80ee 12%,#377bea 70%,#3474e0 100%);border:1px solid #2c5fc8;border-radius:3px;box-sizing:border-box;box-shadow:inset 1px 1px 0 #7db2f8;"></div>
<div style="left:449px;top:738px;width:159px;height:26px;background:linear-gradient(#1c4bb0,#1e52c2 30%,#2058c8);border:1px solid #16388a;border-radius:3px;box-sizing:border-box;"></div>
<svg style="left:139px;top:744px;" width="16" height="16" viewBox="0 0 16 16"><rect x=".5" y=".5" width="15" height="15" fill="#c8b830" stroke="#7a6a10"/><circle cx="8" cy="8" r="5" fill="#fff" stroke="#5a4a00" stroke-width="1.500"/><path d="M8 5v3h3" stroke="#5a4a00" stroke-width="1.300" fill="none"/></svg>
<span id="t144" class="t" style="left:159px;top:745px;font-size:13px;line-height:15px;color:#fff;letter-spacing:-1.19px;">受信トレイ - Microsof...</span>
<svg style="left:299px;top:743px;" width="18" height="18" viewBox="0 0 18 18"><path d="M4 1h8l3 3v12H4z" fill="#fff" stroke="#888"/><circle cx="7" cy="9" r="4.500" fill="none" stroke="#2a6ad8" stroke-width="2"/><path d="M2 10h10" stroke="#2a6ad8" stroke-width="2"/></svg>
<span id="t145" class="t" style="left:318px;top:745px;font-size:13px;line-height:15px;color:#fff;letter-spacing:-1.01px;">CX-PROGRAMME. ...</span>
<svg style="left:459px;top:743px;" width="17" height="17" viewBox="0 0 17 17"><rect x="0.5" y="1.5" width="16" height="13" rx="1" fill="#222"/><rect x="2" y="3" width="13" height="5" fill="#e8e8e8"/><rect x="2" y="10" width="13" height="3" fill="#c8c040"/><path d="M4 3v5M7 3v5M10 3v5M13 3v5" stroke="#444"/></svg>
<span id="t146" class="t" style="left:479px;top:745px;font-size:13px;line-height:15px;color:#fff;letter-spacing:-0.80px;">20090920 - CX-Progr...</span>
<div style="left:731px;top:743px;width:2px;height:2px;background:#1b44a8;"></div>
<div style="left:734px;top:745px;width:2px;height:2px;background:#1b44a8;"></div>
<div style="left:731px;top:747px;width:2px;height:2px;background:#1b44a8;"></div>
<div style="left:734px;top:749px;width:2px;height:2px;background:#1b44a8;"></div>
<div style="left:731px;top:751px;width:2px;height:2px;background:#1b44a8;"></div>
<div style="left:734px;top:753px;width:2px;height:2px;background:#1b44a8;"></div>
<div style="left:731px;top:755px;width:2px;height:2px;background:#1b44a8;"></div>
<div style="left:734px;top:757px;width:2px;height:2px;background:#1b44a8;"></div>
<div style="left:731px;top:759px;width:2px;height:2px;background:#1b44a8;"></div>
<div style="left:741px;top:742px;width:127px;height:20px;background:#fff;border:1px solid #7f9db9;box-sizing:border-box;"></div>
<span id="t147" class="t" style="left:746px;top:744px;font-size:13px;line-height:15px;color:#9a9a9a;letter-spacing:-0.40px;"><span class="k" style="transform:scaleX(0.690);margin-right:-28.21px">デスクトップの</span>検索</span>
<div style="left:868px;top:742px;width:25px;height:20px;background:linear-gradient(#f4f6fb,#cfd8ec);border:1px solid #8aa0c8;box-sizing:border-box;border-radius:0 2px 2px 0;"></div>
<svg style="left:872px;top:744px;" width="17" height="16" viewBox="0 0 17 16"><circle cx="9.500" cy="6" r="3.500" fill="#dfe8f8" stroke="#3a5fa8" stroke-width="1.600"/><path d="M7 8.500l-3.500 4" stroke="#3a5fa8" stroke-width="2"/></svg>
<div style="left:914px;top:734px;width:110px;height:34px;background:linear-gradient(to bottom,#1a8ae0 0%,#35b0f4 6%,#18a0ec 14%,#0f92e4 50%,#0d88d8 85%,#0a6cb4 100%);border-left:1px solid #0a4c9a;box-sizing:border-box;"></div>
<svg style="left:906px;top:741px;" width="20" height="20" viewBox="0 0 20 20"><circle cx="10" cy="10" r="8.500" fill="#2f7bea" stroke="#bfe0ff" stroke-width="1.200"/><path d="M11.500 6l-4 4l4 4" fill="none" stroke="#fff" stroke-width="2.200"/></svg>
<svg style="left:926px;top:742px;" width="18" height="18" viewBox="0 0 18 18"><rect x="6" y="1" width="10" height="8" fill="#c8d4f0" stroke="#334"/><rect x="1" y="6" width="10" height="8" fill="#9fb4e8" stroke="#334"/><path d="M3 16h7" stroke="#ccc" stroke-width="2"/></svg>
<svg style="left:944px;top:741px;" width="20" height="20" viewBox="0 0 20 20"><path d="M6 1h8l5 5v8l-5 5h-8l-5-5v-8z" fill="#1010c0" stroke="#000060"/><path d="M2 10h3l2-4l3 8l2-6l1 2h4" fill="none" stroke="#fff" stroke-width="1.200"/></svg>
<svg style="left:963px;top:742px;" width="18" height="18" viewBox="0 0 18 18"><circle cx="8" cy="8" r="6.500" fill="#b8b8b8" stroke="#555"/><circle cx="7" cy="7" r="3" fill="#e8e8e8"/><path d="M12 11l4 5" stroke="#666" stroke-width="2"/></svg>
<span id="t148" class="t" style="left:984px;top:745px;font-size:13px;line-height:15px;color:#fff;letter-spacing:-0.71px;">17:18</span>
<svg style="left:24px;top:155px;" width="16" height="16" viewBox="0 0 16 16"><g fill="#fff" stroke="#000" stroke-width="1.600"><rect x="5" y="1" width="5" height="3" rx="1"/><rect x="1" y="6" width="4" height="3" rx="1"/><rect x="6" y="6" width="4" height="3" rx="1"/><rect x="11" y="6" width="4" height="3" rx="1"/><rect x="3" y="12" width="4" height="3" rx="1"/><rect x="9" y="12" width="4" height="3" rx="1"/></g><path d="M7.500 4v2M3 9v1h10v-1M8 9v1M5 10v2M11 10v2" fill="none" stroke="#000" stroke-width="1.200"/></svg>
<svg style="left:43px;top:171px;" width="17" height="16" viewBox="0 0 17 16"><rect x="0.500" y="0.500" width="16" height="8.500" rx="1.500" fill="#111"/><rect x="2" y="3" width="4" height="5" fill="#8a8a8a"/><rect x="6.500" y="3" width="4" height="5" fill="#a8a8a8"/><rect x="11" y="3" width="4" height="5" fill="#b8b8b8"/><rect x="2" y="1.200" width="2" height="1" fill="#7c7"/><path d="M1 12.500h3M12 12.500h3" stroke="#000" stroke-width="1.200"/><path d="M5.500 10.500l4.500 4M10 10.500l-4.500 4" stroke="#b02010" stroke-width="1.100"/></svg>
<svg style="left:64px;top:188px;" width="15" height="15" viewBox="0 0 15 15"><rect x="0.700" y="0.700" width="11" height="5.600" rx="1.500" fill="#f2f06a" stroke="#8a8a20" stroke-width="1"/><circle cx="10.500" cy="3" r="1" fill="#000"/><path d="M11.500 3.500q2 .5 1.500 4.500" fill="none" stroke="#000" stroke-width="1.100"/><path d="M1.500 10.500v-1.500h11.500v1.500M5.500 9v1.500M9.500 9v1.500" fill="none" stroke="#000" stroke-width="1.200"/><path d="M.5 13h3M5 13h3M9.500 13h3" stroke="#000" stroke-width="1.600"/></svg>
<svg style="left:63px;top:204px;" width="15" height="15" viewBox="0 0 15 15"><rect width="15" height="15" fill="#1fe0e0"/><rect x="1" y="2" width="5" height="9" rx="1.500" fill="#111"/><rect x="2" y="4" width="2" height="5" fill="#8a8a60"/><rect x="3" y="11" width="2" height="3" fill="#111"/><path d="M8 1h5v3h-5z" fill="#111"/><rect x="10" y="4" width="2.200" height="10" fill="#e8e020" stroke="#333" stroke-width=".6"/></svg>
<svg style="left:63px;top:219px;" width="15" height="16" viewBox="0 0 15 16"><rect x="1" y="1.500" width="12.500" height="13.500" rx="1.500" fill="#fff" stroke="#000" stroke-width="1.500"/><path d="M3 1v2M5.500 1v2M8 1v2M10.500 1v2" stroke="#000"/><path d="M3.500 7h3M3.500 9.500h3M3.500 12h3" stroke="#666"/><circle cx="9.500" cy="10" r="2.600" fill="#d8d820" stroke="#000"/><circle cx="9.500" cy="10" r=".9" fill="#000"/></svg>
<svg style="left:61px;top:236px;" width="18" height="16" viewBox="0 0 18 16"><path d="M1 8l8-5l7 3l-8 5z" fill="#a8a8a8" stroke="#666" stroke-width=".8"/><path d="M1 8v2l7 3v-2z" fill="#555"/><path d="M8 11v2l8-5v-2z" fill="#777"/><path d="M3 11v2M5 12v2M7 13v2M9.500 12.500v2M11.500 11.300v2M13.500 10v2M15.500 8.700v2" stroke="#111" stroke-width="1.100"/></svg>
<svg style="left:62px;top:251px;" width="16" height="17" viewBox="0 0 16 17"><polygon points="9.6,5.0 7.6,6.1 8.3,8.3 6.1,7.6 5.0,9.6 3.9,7.6 1.7,8.3 2.4,6.1 0.4,5.0 2.4,3.9 1.7,1.7 3.9,2.4 5.0,0.4 6.1,2.4 8.3,1.7 7.6,3.9" fill="#e8e040" stroke="#222" stroke-width=".9"/><circle cx="5" cy="5" r="1.1" fill="#222"/><polygon points="15.1,7.5 13.1,8.6 13.8,10.8 11.6,10.1 10.5,12.1 9.4,10.1 7.2,10.8 7.9,8.6 5.9,7.5 7.9,6.4 7.2,4.2 9.4,4.9 10.5,2.9 11.6,4.9 13.8,4.2 13.1,6.4" fill="#e8e040" stroke="#222" stroke-width=".9"/><circle cx="10.5" cy="7.5" r="1.1" fill="#222"/><polygon points="11.6,12.0 9.6,13.1 10.3,15.3 8.1,14.6 7.0,16.6 5.9,14.6 3.7,15.3 4.4,13.1 2.4,12.0 4.4,10.9 3.7,8.7 5.9,9.4 7.0,7.4 8.1,9.4 10.3,8.7 9.6,10.9" fill="#e8e040" stroke="#222" stroke-width=".9"/><circle cx="7" cy="12" r="1.1" fill="#222"/></svg>
<svg style="left:82px;top:267px;" width="17" height="16" viewBox="0 0 17 16"><path d="M3 8q-3-1-1.500-4q1-2 3.500-1.500q1-2.500 4-2q2.500.5 2.500 2.500q3.500 0 3 3.500q-.5 2-3 1.500" fill="#fff" stroke="#111" stroke-width="1.100"/><polygon points="14.0,10.5 11.9,11.7 12.5,14.0 10.2,13.4 9.0,15.5 7.8,13.4 5.5,14.0 6.1,11.7 4.0,10.5 6.1,9.3 5.5,7.0 7.8,7.6 9.0,5.5 10.2,7.6 12.5,7.0 11.9,9.3" fill="#e8e040" stroke="#222" stroke-width=".9"/><circle cx="9" cy="10.5" r="1.2" fill="#222"/></svg>
<svg style="left:102px;top:284px;" width="15" height="15" viewBox="0 0 15 15"><rect x="0.700" y="0.700" width="11" height="5.600" rx="1.500" fill="#f2f06a" stroke="#8a8a20" stroke-width="1"/><circle cx="10.500" cy="3" r="1" fill="#000"/><path d="M11.500 3.500q2 .5 1.500 4.500" fill="none" stroke="#000" stroke-width="1.100"/><path d="M1.500 10.500v-1.500h11.500v1.500M5.500 9v1.500M9.500 9v1.500" fill="none" stroke="#000" stroke-width="1.200"/><path d="M.5 13h3M5 13h3M9.500 13h3" stroke="#000" stroke-width="1.600"/></svg>
<svg style="left:102px;top:300px;" width="14" height="14" viewBox="0 0 14 14"><path d="M1 3.500q0-2.500 3-2.500h6q3 0 3 2.500v4q0 2.500-3 2.500h-6q-3 0-3-2.500z" fill="#ecec40" stroke="#222" stroke-width="1.100"/><ellipse cx="7" cy="3.500" rx="4.500" ry="1.600" fill="#f8f890" stroke="#111" stroke-width="1"/><path d="M4.500 5v5M9.500 5v5" stroke="#111" stroke-width="1"/><rect x="4.500" y="10" width="5" height="2" fill="#c8c820" stroke="#111" stroke-width=".9"/><ellipse cx="7" cy="12.600" rx="1.800" ry="1" fill="#111"/></svg>
<svg style="left:102px;top:316px;" width="14" height="14" viewBox="0 0 14 14"><path d="M1 3.500q0-2.500 3-2.500h6q3 0 3 2.500v4q0 2.500-3 2.500h-6q-3 0-3-2.500z" fill="#ecec40" stroke="#222" stroke-width="1.100"/><ellipse cx="7" cy="3.500" rx="4.500" ry="1.600" fill="#f8f890" stroke="#111" stroke-width="1"/><path d="M4.500 5v5M9.500 5v5" stroke="#111" stroke-width="1"/><rect x="4.500" y="10" width="5" height="2" fill="#c8c820" stroke="#111" stroke-width=".9"/><ellipse cx="7" cy="12.600" rx="1.800" ry="1" fill="#111"/></svg>
<svg style="left:102px;top:332px;" width="14" height="14" viewBox="0 0 14 14"><path d="M1 3.500q0-2.500 3-2.500h6q3 0 3 2.500v4q0 2.500-3 2.500h-6q-3 0-3-2.500z" fill="#ecec40" stroke="#222" stroke-width="1.100"/><ellipse cx="7" cy="3.500" rx="4.500" ry="1.600" fill="#f8f890" stroke="#111" stroke-width="1"/><path d="M4.500 5v5M9.500 5v5" stroke="#111" stroke-width="1"/><rect x="4.500" y="10" width="5" height="2" fill="#c8c820" stroke="#111" stroke-width=".9"/><ellipse cx="7" cy="12.600" rx="1.800" ry="1" fill="#111"/></svg>
<svg style="left:102px;top:348px;" width="14" height="14" viewBox="0 0 14 14"><path d="M1 3.500q0-2.500 3-2.500h6q3 0 3 2.500v4q0 2.500-3 2.500h-6q-3 0-3-2.500z" fill="#ecec40" stroke="#222" stroke-width="1.100"/><ellipse cx="7" cy="3.500" rx="4.500" ry="1.600" fill="#f8f890" stroke="#111" stroke-width="1"/><path d="M4.500 5v5M9.500 5v5" stroke="#111" stroke-width="1"/><rect x="4.500" y="10" width="5" height="2" fill="#c8c820" stroke="#111" stroke-width=".9"/><ellipse cx="7" cy="12.600" rx="1.800" ry="1" fill="#111"/></svg>
<svg style="left:102px;top:364px;" width="14" height="14" viewBox="0 0 14 14"><path d="M1 3.500q0-2.500 3-2.500h6q3 0 3 2.500v4q0 2.500-3 2.500h-6q-3 0-3-2.500z" fill="#ecec40" stroke="#222" stroke-width="1.100"/><ellipse cx="7" cy="3.500" rx="4.500" ry="1.600" fill="#f8f890" stroke="#111" stroke-width="1"/><path d="M4.500 5v5M9.500 5v5" stroke="#111" stroke-width="1"/><rect x="4.500" y="10" width="5" height="2" fill="#c8c820" stroke="#111" stroke-width=".9"/><ellipse cx="7" cy="12.600" rx="1.800" ry="1" fill="#111"/></svg>
<svg style="left:102px;top:380px;" width="14" height="14" viewBox="0 0 14 14"><path d="M1 3.500q0-2.500 3-2.500h6q3 0 3 2.500v4q0 2.500-3 2.500h-6q-3 0-3-2.500z" fill="#ecec40" stroke="#222" stroke-width="1.100"/><ellipse cx="7" cy="3.500" rx="4.500" ry="1.600" fill="#f8f890" stroke="#111" stroke-width="1"/><path d="M4.500 5v5M9.500 5v5" stroke="#111" stroke-width="1"/><rect x="4.500" y="10" width="5" height="2" fill="#c8c820" stroke="#111" stroke-width=".9"/><ellipse cx="7" cy="12.600" rx="1.800" ry="1" fill="#111"/></svg>
<svg style="left:102px;top:396px;" width="14" height="14" viewBox="0 0 14 14"><path d="M1 3.500q0-2.500 3-2.500h6q3 0 3 2.500v4q0 2.500-3 2.500h-6q-3 0-3-2.500z" fill="#ecec40" stroke="#222" stroke-width="1.100"/><ellipse cx="7" cy="3.500" rx="4.500" ry="1.600" fill="#f8f890" stroke="#111" stroke-width="1"/><path d="M4.500 5v5M9.500 5v5" stroke="#111" stroke-width="1"/><rect x="4.500" y="10" width="5" height="2" fill="#c8c820" stroke="#111" stroke-width=".9"/><ellipse cx="7" cy="12.600" rx="1.800" ry="1" fill="#111"/></svg>
<svg style="left:102px;top:412px;" width="14" height="14" viewBox="0 0 14 14"><path d="M1 3.500q0-2.500 3-2.500h6q3 0 3 2.500v4q0 2.500-3 2.500h-6q-3 0-3-2.500z" fill="#ecec40" stroke="#222" stroke-width="1.100"/><ellipse cx="7" cy="3.500" rx="4.500" ry="1.600" fill="#f8f890" stroke="#111" stroke-width="1"/><path d="M4.500 5v5M9.500 5v5" stroke="#111" stroke-width="1"/><rect x="4.500" y="10" width="5" height="2" fill="#c8c820" stroke="#111" stroke-width=".9"/><ellipse cx="7" cy="12.600" rx="1.800" ry="1" fill="#111"/></svg>
<svg style="left:102px;top:428px;" width="14" height="14" viewBox="0 0 14 14"><path d="M1 3.500q0-2.500 3-2.500h6q3 0 3 2.500v4q0 2.500-3 2.500h-6q-3 0-3-2.500z" fill="#ecec40" stroke="#222" stroke-width="1.100"/><ellipse cx="7" cy="3.500" rx="4.500" ry="1.600" fill="#f8f890" stroke="#111" stroke-width="1"/><path d="M4.500 5v5M9.500 5v5" stroke="#111" stroke-width="1"/><rect x="4.500" y="10" width="5" height="2" fill="#c8c820" stroke="#111" stroke-width=".9"/><ellipse cx="7" cy="12.600" rx="1.800" ry="1" fill="#111"/></svg>
<svg style="left:102px;top:444px;" width="14" height="14" viewBox="0 0 14 14"><path d="M1 3.500q0-2.500 3-2.500h6q3 0 3 2.500v4q0 2.500-3 2.500h-6q-3 0-3-2.500z" fill="#ecec40" stroke="#222" stroke-width="1.100"/><ellipse cx="7" cy="3.500" rx="4.500" ry="1.600" fill="#f8f890" stroke="#111" stroke-width="1"/><path d="M4.500 5v5M9.500 5v5" stroke="#111" stroke-width="1"/><rect x="4.500" y="10" width="5" height="2" fill="#c8c820" stroke="#111" stroke-width=".9"/><ellipse cx="7" cy="12.600" rx="1.800" ry="1" fill="#111"/></svg>
<svg style="left:102px;top:460px;" width="14" height="14" viewBox="0 0 14 14"><path d="M1 3.500q0-2.500 3-2.500h6q3 0 3 2.500v4q0 2.500-3 2.500h-6q-3 0-3-2.500z" fill="#ecec40" stroke="#222" stroke-width="1.100"/><ellipse cx="7" cy="3.500" rx="4.500" ry="1.600" fill="#f8f890" stroke="#111" stroke-width="1"/><path d="M4.500 5v5M9.500 5v5" stroke="#111" stroke-width="1"/><rect x="4.500" y="10" width="5" height="2" fill="#c8c820" stroke="#111" stroke-width=".9"/><ellipse cx="7" cy="12.600" rx="1.800" ry="1" fill="#111"/></svg>
<svg style="left:102px;top:476px;" width="14" height="14" viewBox="0 0 14 14"><path d="M1 3.500q0-2.500 3-2.500h6q3 0 3 2.500v4q0 2.500-3 2.500h-6q-3 0-3-2.500z" fill="#ecec40" stroke="#222" stroke-width="1.100"/><ellipse cx="7" cy="3.500" rx="4.500" ry="1.600" fill="#f8f890" stroke="#111" stroke-width="1"/><path d="M4.500 5v5M9.500 5v5" stroke="#111" stroke-width="1"/><rect x="4.500" y="10" width="5" height="2" fill="#c8c820" stroke="#111" stroke-width=".9"/><ellipse cx="7" cy="12.600" rx="1.800" ry="1" fill="#111"/></svg>
<svg style="left:16px;top:54px;" width="13" height="15" viewBox="0 0 13 15"><path d="M1 1h7l4 4v9h-11z" fill="#fff" stroke="#000" stroke-width="1.400"/><path d="M8 1v4h4" fill="none" stroke="#000" stroke-width="1"/></svg>
<svg style="left:37px;top:52px;" width="18" height="17" viewBox="0 0 18 17"><path d="M1 15v-9h4l1.500 1.500h6v2" fill="#e0d890" stroke="#000" stroke-width="1"/><path d="M1 15l3-6h12l-3 6z" fill="#9a9a30" stroke="#000" stroke-width="1.200"/><path d="M9 4q3-3 6 0m0 0v-2.500m0 2.500h-2.500" fill="none" stroke="#000" stroke-width="1.100"/></svg>
<svg style="left:61px;top:54px;" width="15" height="15" viewBox="0 0 15 15"><rect x=".7" y=".7" width="13.600" height="13.600" fill="#8a8a28" stroke="#000" stroke-width="1.400"/><rect x="3" y="1" width="8.500" height="5.500" fill="#f4f4f4"/><rect x="3.500" y="9" width="8" height="5" fill="#111"/><rect x="9" y="10" width="1.800" height="3" fill="#ddd"/></svg>
<div style="left:84px;top:50px;width:2px;height:22px;border-left:1px solid #ACA899;border-right:1px solid #fff;box-sizing:border-box;"></div>
<svg style="left:90px;top:53px;" width="18" height="17" viewBox="0 0 18 17"><path d="M9 1h5l3 3v9h-8z" fill="#fff" stroke="#000" stroke-width="1.200"/><path d="M1 6h5l2.500 2.500v7.500h-7.500z" fill="#fff" stroke="#000" stroke-width="1.200"/><circle cx="11.500" cy="10.500" r="3.200" fill="#30c8f0" stroke="#1040a0" stroke-width="1.300"/><path d="M14 13l2.500 2.500" stroke="#000" stroke-width="1.600"/></svg>
<div style="left:115px;top:50px;width:2px;height:22px;border-left:1px solid #ACA899;border-right:1px solid #fff;box-sizing:border-box;"></div>
<svg style="left:121px;top:54px;filter:drop-shadow(1px 1px 0 #fff);overflow:visible;" width="14" height="15" viewBox="0 0 14 15"><g fill="none" stroke="#A9A592" stroke-width="1.300"><path d="M3 6l3-4h8M1 8h13M1 11h13M3 6h11" /><rect x="1" y="6" width="13" height="7"/></g></svg>
<svg style="left:407px;top:53px;" width="18" height="16" viewBox="0 0 18 16"><path d="M1 1v11l3-3l2 5l2-1l-2-4.500h4z" fill="#000"/><text x="8" y="11.500" font-size="15" font-weight="bold" font-family="Liberation Serif,serif" fill="#1c1c8c">?</text></svg>
<svg style="left:450px;top:54px;" width="16" height="15" viewBox="0 0 16 15"><path d="M7 0.7l6.5 11.5h-13z" fill="#f4f020" stroke="#555500" stroke-width="1"/><path d="M8 4l-2.500 4h2.500l-1.500 3.500" fill="none" stroke="#000" stroke-width="1.300"/></svg>
<svg style="left:472px;top:54px;filter:drop-shadow(1px 1px 0 #fff);overflow:visible;" width="17" height="15" viewBox="0 0 17 15"><g fill="none" stroke="#A9A592" stroke-width="1.300"><path d="M5 1l6 1l-2 3l3 1l-5 3l-3-2l2-2z" fill="#A9A592"/><path d="M1.5 14.5v-2M3 11.5h1M5.5 12q2.500 0 1.500 2.500h-1.500v-1.500M9 14.5v-2M10.5 11.5h1M13 12q2.500 0 1.500 2.500h-1.500v-1.500M16.5 14.5v-2" stroke-width="1"/></g></svg>
<svg style="left:494px;top:53px;" width="18" height="17" viewBox="0 0 18 17"><path d="M2 8v-3l2-3h1.500l1 2h2l1-2h1.500l2 3v3h-4v-2h-3v2z" fill="#000"/><path d="M12.04 7.7l4.68 8.28h-9.36z" fill="#f4f020" stroke="#555500" stroke-width="1"/><path d="M12 10v3M10.800 12h2.600" stroke="#000" stroke-width="1"/></svg>
<div style="left:519px;top:50px;width:2px;height:22px;border-left:1px solid #ACA899;border-right:1px solid #fff;box-sizing:border-box;"></div>
<svg style="left:526px;top:54px;filter:drop-shadow(1px 1px 0 #fff);overflow:visible;" width="17" height="15" viewBox="0 0 17 15"><g fill="none" stroke="#A9A592" stroke-width="1.300"><path d="M6 1v6M10 1v6" stroke-width="2"/><path d="M1.5 14.5v-2M3 11.5h1M5.5 12q2.500 0 1.500 2.500h-1.500v-1.500M9 14.5v-2M10.5 11.5h1M13 12q2.500 0 1.500 2.500h-1.500v-1.500M16.5 14.5v-2" stroke-width="1"/></g></svg>
<svg style="left:552px;top:55px;filter:drop-shadow(1px 1px 0 #fff);overflow:visible;" width="10" height="12" viewBox="0 0 10 12"><g fill="none" stroke="#A9A592" stroke-width="1.300"><path d="M2.500 0v12M7.500 0v12" stroke-width="3"/></g></svg>
<div style="left:573px;top:50px;width:2px;height:22px;border-left:1px solid #ACA899;border-right:1px solid #fff;box-sizing:border-box;"></div>
<svg style="left:579px;top:53px;filter:drop-shadow(1px 1px 0 #fff);overflow:visible;" width="17" height="16" viewBox="0 0 17 16"><g fill="none" stroke="#A9A592" stroke-width="1.300"><path d="M1 1h6l3 3v8h-9z"/><path d="M3 4h3M3 7h4M3 9.500h2"/><rect x="8" y="10" width="8" height="4" rx="2" fill="#A9A592"/></g></svg>
<svg style="left:602px;top:53px;filter:drop-shadow(1px 1px 0 #fff);overflow:visible;" width="17" height="16" viewBox="0 0 17 16"><g fill="none" stroke="#A9A592" stroke-width="1.300"><path d="M7 1h5l3 3v9h-8z"/><path d="M11 10v-5l-2 2M11 5l2 2"/><rect x="0.500" y="10" width="8" height="4" rx="2" fill="#A9A592"/></g></svg>
<svg style="left:625px;top:53px;filter:drop-shadow(1px 1px 0 #fff);overflow:visible;" width="17" height="16" viewBox="0 0 17 16"><g fill="none" stroke="#A9A592" stroke-width="1.300"><path d="M1 7h7v8h-7z"/><path d="M6 5v-4h9v9h-5"/><circle cx="10.500" cy="5" r="2.500"/><path d="M12 7l3.500 4" stroke-width="1.600"/></g></svg>
<div style="left:650px;top:50px;width:2px;height:22px;border-left:1px solid #ACA899;border-right:1px solid #fff;box-sizing:border-box;"></div>
<svg style="left:657px;top:53px;filter:drop-shadow(1px 1px 0 #fff);overflow:visible;" width="17" height="16" viewBox="0 0 17 16"><g fill="none" stroke="#A9A592" stroke-width="1.300"><path d="M4 1l2 1.500l2-1.500l1 2l2.500 0l-1 2.500l1.500 1.500l-2.500 1l-1 2.500l-2-1.500l-2.500 1l0-2.500l-2-1.500l2-1.500z" fill="#A9A592" stroke="none"/><rect x="7" y="10" width="8.500" height="4" rx="2" fill="#A9A592"/></g></svg>
<svg style="left:680px;top:53px;filter:drop-shadow(1px 1px 0 #fff);overflow:visible;" width="17" height="16" viewBox="0 0 17 16"><g fill="none" stroke="#A9A592" stroke-width="1.300"><g transform="translate(5,0)"><path d="M4 1l2 1.500l2-1.500l1 2l2.500 0l-1 2.500l1.500 1.500l-2.500 1l-1 2.500l-2-1.500l-2.500 1l0-2.500l-2-1.500l2-1.500z" fill="#A9A592" stroke="none"/></g><rect x="0.500" y="10" width="8.500" height="4" rx="2" fill="#A9A592"/><path d="M11 10v4"/></g></svg>
<svg style="left:702px;top:53px;filter:drop-shadow(1px 1px 0 #fff);overflow:visible;" width="17" height="16" viewBox="0 0 17 16"><g fill="none" stroke="#A9A592" stroke-width="1.300"><g transform="translate(0,3)"><path d="M4 1l2 1.500l2-1.500l1 2l2.500 0l-1 2.500l1.500 1.500l-2.500 1l-1 2.500l-2-1.500l-2.500 1l0-2.500l-2-1.500l2-1.500z" fill="#A9A592" stroke="none"/></g><path d="M6 1h9v8"/><circle cx="10.500" cy="5.500" r="2.500"/><path d="M12 7.500l3.500 4" stroke-width="1.600"/></g></svg>
<div style="left:727px;top:50px;width:2px;height:22px;border-left:1px solid #ACA899;border-right:1px solid #fff;box-sizing:border-box;"></div>
<svg style="left:734px;top:53px;filter:drop-shadow(1px 1px 0 #fff);overflow:visible;" width="17" height="16" viewBox="0 0 17 16"><g fill="none" stroke="#A9A592" stroke-width="1.300"><rect x="1" y="1" width="15" height="7" rx="1.500" fill="#A9A592"/><rect x="3" y="3" width="3" height="3.500" fill="#ECE9D8" stroke="none"/><rect x="7" y="3" width="3" height="3.500" fill="#ECE9D8" stroke="none"/><rect x="11" y="3" width="3" height="3.500" fill="#ECE9D8" stroke="none"/><path d="M1 12l2-2h11l2 2z" fill="#A9A592"/></g></svg>
<svg style="left:757px;top:53px;filter:drop-shadow(1px 1px 0 #fff);overflow:visible;" width="17" height="16" viewBox="0 0 17 16"><g fill="none" stroke="#A9A592" stroke-width="1.300"><rect x="1" y="1" width="15" height="7" rx="1.500" fill="#A9A592"/><rect x="3" y="3" width="3" height="3.500" fill="#ECE9D8" stroke="none"/><rect x="7" y="3" width="3" height="3.500" fill="#ECE9D8" stroke="none"/><rect x="11" y="3" width="3" height="3.500" fill="#ECE9D8" stroke="none"/><path d="M2 11l2 2l2-2l2 2l2-2l2 2l2-2"/></g></svg>
<svg style="left:780px;top:53px;filter:drop-shadow(1px 1px 0 #fff);overflow:visible;" width="17" height="16" viewBox="0 0 17 16"><g fill="none" stroke="#A9A592" stroke-width="1.300"><rect x="1" y="1" width="15" height="7" rx="1.500" fill="#A9A592"/><rect x="3" y="3" width="3" height="3.500" fill="#ECE9D8" stroke="none"/><rect x="7" y="3" width="3" height="3.500" fill="#ECE9D8" stroke="none"/><rect x="11" y="3" width="3" height="3.500" fill="#ECE9D8" stroke="none"/><path d="M1.5 14.5v-2M3 11.5h1M5.5 12q2.500 0 1.500 2.500h-1.500v-1.500M9 14.5v-2M10.5 11.5h1M13 12q2.500 0 1.500 2.500h-1.500v-1.500M16.5 14.5v-2" stroke-width="1"/></g></svg>
<svg style="left:803px;top:53px;filter:drop-shadow(1px 1px 0 #fff);overflow:visible;" width="17" height="16" viewBox="0 0 17 16"><g fill="none" stroke="#A9A592" stroke-width="1.300"><rect x="1" y="1" width="15" height="7" rx="1.500" fill="#A9A592"/><rect x="3" y="3" width="3" height="3.500" fill="#ECE9D8" stroke="none"/><rect x="7" y="3" width="3" height="3.500" fill="#ECE9D8" stroke="none"/><rect x="11" y="3" width="3" height="3.500" fill="#ECE9D8" stroke="none"/><path d="M2 12h2M6 12h2M10 12h2M13 10.500l2 1.500l-2 1.500"/></g></svg>
<div style="left:827px;top:50px;width:2px;height:22px;border-left:1px solid #ACA899;border-right:1px solid #fff;box-sizing:border-box;"></div>
<svg style="left:833px;top:53px;filter:drop-shadow(1px 1px 0 #fff);overflow:visible;" width="17" height="16" viewBox="0 0 17 16"><g fill="none" stroke="#A9A592" stroke-width="1.300"><path d="M6 9h4v-7h5" /><path d="M1.5 15.5v-2M3 12.5h1M5.5 13q2.500 0 1.500 2.500h-1.500v-1.500M9 15.5v-2M10.5 12.5h1M13 13q2.500 0 1.500 2.500h-1.500v-1.500M16.5 15.5v-2" stroke-width="1"/></g></svg>
<svg style="left:857px;top:54px;" width="17" height="15" viewBox="0 0 17 15"><path d="M1.500 3v9h14v-9M5 5v7M8.500 5v7M12 5v7" fill="none" stroke="#000" stroke-width="1.300"/><path d="M1 13.500h15" stroke="#000" stroke-width="1.200"/></svg>
<div style="left:881px;top:50px;width:2px;height:22px;border-left:1px solid #ACA899;border-right:1px solid #fff;box-sizing:border-box;"></div>
<svg style="left:887px;top:52px;" width="18" height="17" viewBox="0 0 18 17"><rect x="1.500" y="5" width="5" height="4.500" fill="#f0e020" stroke="#000"/><path d="M2.500 5v-1.500q1.500-2 3 0v1.500" fill="none" stroke="#000"/><path d="M8 6h2M11 6h2M13.500 6.500v2" stroke="#000" stroke-dasharray="1.500 1"/><path d="M9 14.500q0-4 4-4t4 4z" fill="#fff" stroke="#000" stroke-width="1.200"/><rect x="8" y="14" width="10" height="2" fill="#000"/><rect x="11.500" y="9" width="3" height="2" fill="#e8d820" stroke="#000" stroke-width=".6"/></svg>
<svg style="left:911px;top:53px;filter:drop-shadow(1px 1px 0 #fff);overflow:visible;" width="17" height="16" viewBox="0 0 17 16"><g fill="none" stroke="#A9A592" stroke-width="1.300"><rect x="1" y="9.500" width="9" height="4" rx="2" fill="#A9A592"/><path d="M9 9l3-3"/><circle cx="13" cy="4" r="2.200" fill="#A9A592"/></g></svg>
<svg style="left:16px;top:86px;filter:drop-shadow(1px 1px 0 #fff);overflow:visible;" width="12" height="12" viewBox="0 0 12 12"><g fill="none" stroke="#A9A592" stroke-width="1.300"><circle cx="4.500" cy="4.500" r="3"/><path d="M7 7l3.500 4"/></g></svg>
<svg style="left:36px;top:82px;filter:drop-shadow(1px 1px 0 #fff);overflow:visible;" width="18" height="18" viewBox="0 0 18 18"><g fill="none" stroke="#A9A592" stroke-width="1.300"><circle cx="6" cy="6" r="4"/><path d="M9 9l6 7M15 2l-9 13" stroke-width="1.600"/><path d="M3 10l3 4l2-3" /></g></svg>
<svg style="left:59px;top:82px;filter:drop-shadow(1px 1px 0 #fff);overflow:visible;" width="18" height="18" viewBox="0 0 18 18"><g fill="none" stroke="#A9A592" stroke-width="1.300"><circle cx="7" cy="7" r="5"/><path d="M11 11l5 5.500" stroke-width="1.800"/></g></svg>
<svg style="left:82px;top:82px;filter:drop-shadow(1px 1px 0 #fff);overflow:visible;" width="18" height="18" viewBox="0 0 18 18"><g fill="none" stroke="#A9A592" stroke-width="1.300"><circle cx="5.500" cy="5.500" r="3.500" stroke-dasharray="2 1"/><path d="M8 8l7.500 8" stroke-width="1.800"/></g></svg>
<div style="left:107px;top:80px;width:2px;height:22px;border-left:1px solid #ACA899;border-right:1px solid #fff;box-sizing:border-box;"></div>
<div style="left:111px;top:81px;width:19px;height:21px;background:repeating-conic-gradient(#fff 0 25%,#ECE9D8 0 50%) 0 0/2px 2px;border-top:1px solid #716F64;border-left:1px solid #716F64;box-sizing:border-box;"></div>
<div style="left:114px;top:84px;width:1px;height:1px;background:#999;"></div>
<div style="left:114px;top:88px;width:1px;height:1px;background:#999;"></div>
<div style="left:114px;top:92px;width:1px;height:1px;background:#999;"></div>
<div style="left:114px;top:96px;width:1px;height:1px;background:#999;"></div>
<div style="left:114px;top:100px;width:1px;height:1px;background:#999;"></div>
<div style="left:118px;top:84px;width:1px;height:1px;background:#999;"></div>
<div style="left:118px;top:88px;width:1px;height:1px;background:#999;"></div>
<div style="left:118px;top:92px;width:1px;height:1px;background:#999;"></div>
<div style="left:118px;top:96px;width:1px;height:1px;background:#999;"></div>
<div style="left:118px;top:100px;width:1px;height:1px;background:#999;"></div>
<div style="left:122px;top:84px;width:1px;height:1px;background:#999;"></div>
<div style="left:122px;top:88px;width:1px;height:1px;background:#999;"></div>
<div style="left:122px;top:92px;width:1px;height:1px;background:#999;"></div>
<div style="left:122px;top:96px;width:1px;height:1px;background:#999;"></div>
<div style="left:122px;top:100px;width:1px;height:1px;background:#999;"></div>
<div style="left:126px;top:84px;width:1px;height:1px;background:#999;"></div>
<div style="left:126px;top:88px;width:1px;height:1px;background:#999;"></div>
<div style="left:126px;top:92px;width:1px;height:1px;background:#999;"></div>
<div style="left:126px;top:96px;width:1px;height:1px;background:#999;"></div>
<div style="left:126px;top:100px;width:1px;height:1px;background:#999;"></div>
<svg style="left:397px;top:84px;filter:drop-shadow(1px 1px 0 #fff);overflow:visible;" width="17" height="16" viewBox="0 0 17 16"><g fill="none" stroke="#A9A592" stroke-width="1.300"><path d="M1 8h16" stroke-width="1.600"/></g></svg>
<svg style="left:420px;top:84px;filter:drop-shadow(1px 1px 0 #fff);overflow:visible;" width="18" height="16" viewBox="0 0 18 16"><g fill="none" stroke="#A9A592" stroke-width="1.300"><circle cx="9" cy="8" r="4.300"/><path d="M1 8h4M13 8h4" stroke-width="1.500"/></g></svg>
<svg style="left:443px;top:84px;filter:drop-shadow(1px 1px 0 #fff);overflow:visible;" width="18" height="16" viewBox="0 0 18 16"><g fill="none" stroke="#A9A592" stroke-width="1.300"><circle cx="9" cy="8" r="4.300"/><path d="M1 8h4M13 8h4M5 13l8-10" stroke-width="1.500"/></g></svg>
<svg style="left:466px;top:84px;filter:drop-shadow(1px 1px 0 #fff);overflow:visible;" width="18" height="17" viewBox="0 0 18 17"><g fill="none" stroke="#A9A592" stroke-width="1.300"><rect x="5" y="1.500" width="7" height="13"/><path d="M1 4.500h15M5 8h7M5 11.500h7" stroke-width="1.400"/></g></svg>
<svg style="left:489px;top:84px;filter:drop-shadow(1px 1px 0 #fff);overflow:visible;" width="18" height="17" viewBox="0 0 18 17"><g fill="none" stroke="#A9A592" stroke-width="1.300"><rect x="5" y="1.500" width="7" height="13"/><path d="M1 4.500h15M1 8h15M5 11.500h7" stroke-width="1.400"/></g></svg>
<svg style="left:512px;top:84px;filter:drop-shadow(1px 1px 0 #fff);overflow:visible;" width="18" height="17" viewBox="0 0 18 17"><g fill="none" stroke="#A9A592" stroke-width="1.300"><path d="M1 5h8M9 2v12M9 2h7M9 8h6M9 14h7" stroke-width="1.500"/><path d="M3 6l4 3l-4 3z" fill="#A9A592"/></g></svg>
<svg style="left:536px;top:83px;filter:drop-shadow(1px 1px 0 #fff);overflow:visible;" width="16" height="13" viewBox="0 0 16 13"><g fill="none" stroke="#A9A592" stroke-width="1.300"><path d="M2 1v9.500h13" stroke-width="1.700"/></g></svg>
<svg style="left:559px;top:84px;filter:drop-shadow(1px 1px 0 #fff);overflow:visible;" width="17" height="16" viewBox="0 0 17 16"><g fill="none" stroke="#A9A592" stroke-width="1.300"><path d="M2 2l8 12M10 2l-8 12M6 8h9" stroke-width="1.700"/></g></svg>
<svg style="left:600px;top:83px;filter:drop-shadow(1px 1px 0 #fff);overflow:visible;" width="18" height="17" viewBox="0 0 18 17"><g fill="none" stroke="#A9A592" stroke-width="1.300"><rect x="1.500" y="1.500" width="9" height="8"/><path d="M9 1l5 1l-2 3l3 1l-4 3l-3-2l2-2z" fill="#A9A592" stroke="none"/><path d="M1.5 16.0v-2M3 13.0h1M5.5 13.5q2.500 0 1.500 2.500h-1.500v-1.500M9 16.0v-2M10.5 13.0h1M13 13.5q2.500 0 1.500 2.500h-1.500v-1.500M16.5 16.0v-2" stroke-width="1"/></g></svg>
<div style="left:625px;top:80px;width:2px;height:22px;border-left:1px solid #ACA899;border-right:1px solid #fff;box-sizing:border-box;"></div>
<svg style="left:631px;top:82px;" width="18" height="18" viewBox="0 0 18 18"><path d="M1 11l8-4l8 4l-8 4z" fill="#fff" stroke="#000"/><path d="M1 13l8 4l8-4" fill="none" stroke="#000"/><path d="M1 9l8-4l8 4l-8 4z" fill="#fff" stroke="#000"/><path d="M7.500 1h3v4.500h2.500l-4 4l-4-4h2.500z" fill="#101070"/></svg>
<svg style="left:655px;top:83px;" width="17" height="17" viewBox="0 0 17 17"><rect x="1" y="6" width="15" height="10" fill="#fff" stroke="#000" stroke-width="1.300"/><path d="M3 10.500h11M3 13h11" stroke="#000" stroke-dasharray="1 1"/><path d="M5.500 3v5l-2-2M5.500 8l2-2M11.500 3v5l-2-2M11.500 8l2-2" fill="none" stroke="#101070" stroke-width="1.400"/><path d="M2 2h1M5 1h1M8 2h1M11 1h1M14 2h1" stroke="#2020a0"/></svg>
<div style="left:679px;top:80px;width:2px;height:22px;border-left:1px solid #ACA899;border-right:1px solid #fff;box-sizing:border-box;"></div>
<svg style="left:686px;top:83px;filter:drop-shadow(1px 1px 0 #fff);overflow:visible;" width="17" height="16" viewBox="0 0 17 16"><g fill="none" stroke="#A9A592" stroke-width="1.300"><path d="M1 6q0-4.500 3.500-4.500t3.500 4.500v1h-7z" fill="#A9A592"/><rect x="7" y="3.500" width="8" height="10.500"/><path d="M9 6h3M9 8.500l3-2M9 11h3"/></g></svg>
<svg style="left:709px;top:83px;filter:drop-shadow(1px 1px 0 #fff);overflow:visible;" width="17" height="16" viewBox="0 0 17 16"><g fill="none" stroke="#A9A592" stroke-width="1.300"><path d="M1 6q0-4.500 3.500-4.500t3.500 4.500v1h-7z" fill="#A9A592"/><rect x="7" y="3.500" width="8" height="10.500"/><path d="M9 6l4 5.500M13 6l-4 5.500"/></g></svg>
<svg style="left:732px;top:83px;filter:drop-shadow(1px 1px 0 #fff);overflow:visible;" width="17" height="16" viewBox="0 0 17 16"><g fill="none" stroke="#A9A592" stroke-width="1.300"><path d="M1 6q0-4.500 3.500-4.500t3.500 4.500v1h-7z" fill="#A9A592"/><rect x="7" y="3.500" width="8" height="10.500"/><path d="M9 9l1.500 2l2.500-5"/><path d="M1 10h5m0 0l-2-1.500M1 12.500h5" stroke-width="1"/></g></svg>
<svg style="left:755px;top:83px;filter:drop-shadow(1px 1px 0 #fff);overflow:visible;" width="17" height="16" viewBox="0 0 17 16"><g fill="none" stroke="#A9A592" stroke-width="1.300"><path d="M1 6q0-4.500 3.500-4.500t3.500 4.500v1h-7z" fill="#A9A592"/><rect x="7" y="3.500" width="8" height="10.500"/><path d="M10 8.500h2v1h-2z"/><path d="M1 11h5l-2-2m2 2l-2 2" stroke-width="1"/></g></svg>
<div style="left:778px;top:80px;width:2px;height:22px;border-left:1px solid #ACA899;border-right:1px solid #fff;box-sizing:border-box;"></div>
<svg style="left:784px;top:83px;" width="18" height="17" viewBox="0 0 18 17"><rect x="5" y="1" width="3" height="15" fill="#111"/><rect x="1.500" y="2.500" width="5" height="3" rx="1" fill="#f0e020" stroke="#000" stroke-width=".8"/><rect x="1.500" y="7" width="5" height="3" rx="1" fill="#f0e020" stroke="#000" stroke-width=".8"/><rect x="1.500" y="11.500" width="5" height="3" rx="1" fill="#f0e020" stroke="#000" stroke-width=".8"/><rect x="10" y="2" width="6" height="3.500" fill="#30b0f8" stroke="#102080" stroke-width=".8"/><rect x="10" y="7" width="6" height="3.500" fill="#30b0f8" stroke="#102080" stroke-width=".8"/><rect x="10" y="12" width="6" height="3.500" fill="#30b0f8" stroke="#102080" stroke-width=".8"/></svg>
<div style="left:807px;top:80px;width:2px;height:22px;border-left:1px solid #ACA899;border-right:1px solid #fff;box-sizing:border-box;"></div>
<svg style="left:815px;top:82px;" width="18" height="18" viewBox="0 0 18 18"><rect x="1" y="1" width="16" height="10" fill="#20d8d8" stroke="#000" stroke-width="1.200"/><path d="M3.500 3v6M7.500 3v6M3.500 6h4M10.500 3v6M14.500 3v6M10.500 6h4" stroke="#000" stroke-width="1.200" fill="none"/><g fill="none" stroke="#000"><path d="M2.0 17.0v-2M3.5 14.0h1M6.0 14.5q2.500 0 1.500 2.500h-1.500v-1.500M9.5 17.0v-2M11.0 14.0h1M13.5 14.5q2.500 0 1.500 2.500h-1.500v-1.500M17.0 17.0v-2" stroke-width="1"/></g></svg>
<svg style="left:840px;top:83px;filter:drop-shadow(1px 1px 0 #fff);overflow:visible;" width="17" height="17" viewBox="0 0 17 17"><g fill="none" stroke="#A9A592" stroke-width="1.300"><path d="M1 1h5v14h-5z" fill="#A9A592"/><rect x="4" y="2.500" width="11" height="11"/><path d="M8 5h4l-4 5h4"/></g></svg>
<svg style="left:863px;top:83px;filter:drop-shadow(1px 1px 0 #fff);overflow:visible;" width="17" height="17" viewBox="0 0 17 17"><g fill="none" stroke="#A9A592" stroke-width="1.300"><path d="M1 1h5v14h-5z" fill="#A9A592"/><rect x="4" y="2.500" width="11" height="11"/><path d="M7 4l6 7M13 4l-6 7"/></g></svg>
<svg style="left:886px;top:83px;filter:drop-shadow(1px 1px 0 #fff);overflow:visible;" width="17" height="17" viewBox="0 0 17 17"><g fill="none" stroke="#A9A592" stroke-width="1.300"><path d="M1 1h5v14h-5z" fill="#A9A592"/><rect x="4" y="2.500" width="11" height="11"/><path d="M7 8l2 3l3.500-7"/></g></svg>
<div style="left:11px;top:110px;width:22px;height:22px;background:repeating-conic-gradient(#fff 0 25%,#ECE9D8 0 50%) 0 0/2px 2px;border-top:1px solid #ACA899;border-left:1px solid #ACA899;border-right:1px solid #fff;border-bottom:1px solid #fff;box-sizing:border-box;"></div>
<div style="left:80px;top:110px;width:22px;height:22px;background:repeating-conic-gradient(#fff 0 25%,#ECE9D8 0 50%) 0 0/2px 2px;border-top:1px solid #ACA899;border-left:1px solid #ACA899;border-right:1px solid #fff;border-bottom:1px solid #fff;box-sizing:border-box;"></div>
<svg style="left:14px;top:115px;" width="18" height="17" viewBox="0 0 18 17"><rect x="1" y="1" width="13" height="11" fill="#fff" stroke="#000" stroke-width="1.300"/><rect x="1.600" y="1.600" width="11.8" height="2" fill="#1c1c9c"/><path d="M6.500 7.500h3l1 1.500h5v6.500h-9z" fill="#e8e070" stroke="#8a8a20" stroke-width=".9"/></svg>
<svg style="left:37px;top:115px;" width="18" height="17" viewBox="0 0 18 17"><g transform="translate(2,0)"><rect x="1" y="1" width="13" height="10" fill="#fff" stroke="#000" stroke-width="1.300"/><rect x="1.600" y="1.600" width="11.8" height="2" fill="#1c1c9c"/></g><path d="M1.500 15l7-7" stroke="#4a2a10" stroke-width="2"/><path d="M6 5l3-2l4 3l-2 3z" fill="#8a8a30" stroke="#222" stroke-width=".8"/></svg>
<svg style="left:59px;top:115px;" width="18" height="17" viewBox="0 0 18 17"><g transform="translate(2,0)"><rect x="1" y="1" width="13" height="10" fill="#fff" stroke="#000" stroke-width="1.300"/><rect x="1.600" y="1.600" width="11.8" height="2" fill="#1c1c9c"/></g><path d="M5 10l3-3l2 2l3-4" fill="none" stroke="#555" stroke-width="1"/><circle cx="3.500" cy="13.500" r="2.200" fill="#fff" stroke="#2a7a6a" stroke-width="1.200"/><circle cx="9" cy="13.500" r="2.200" fill="#fff" stroke="#2a7a6a" stroke-width="1.200"/></svg>
<svg style="left:83px;top:115px;" width="18" height="17" viewBox="0 0 18 17"><g transform="translate(1,0)"><rect x="1" y="1" width="14" height="10" fill="#fff" stroke="#000" stroke-width="1.300"/><rect x="1.600" y="1.600" width="12.8" height="2" fill="#1c1c9c"/></g><path d="M6 8q3-3 6 0" fill="none" stroke="#000" stroke-dasharray="1.500 1"/><rect x="1" y="10" width="5" height="5.500" fill="#fff" stroke="#000" stroke-width="1.200"/><rect x="11" y="10" width="5" height="5.500" fill="#fff" stroke="#000" stroke-width="1.200"/></svg>
<svg style="left:105px;top:115px;" width="18" height="17" viewBox="0 0 18 17"><g transform="translate(3,0)"><rect x="1" y="1" width="13" height="10" fill="#fff" stroke="#000" stroke-width="1.300"/><rect x="1.600" y="1.600" width="11.8" height="2" fill="#1c1c9c"/></g><path d="M9 2v9" stroke="#000" stroke-width=".8"/><rect x="1.500" y="9" width="4.500" height="6" fill="#fff" stroke="#000" stroke-width="1.200"/><path d="M0 11h1.500M0 13h1.500" stroke="#000"/></svg>
<div style="left:128px;top:118px;width:2px;height:14px;background:#111;"></div>
<svg style="left:405px;top:113px;filter:drop-shadow(1px 1px 0 #fff);overflow:visible;" width="18" height="16" viewBox="0 0 18 16"><g fill="none" stroke="#A9A592" stroke-width="1.300"><path d="M8 1l7 1l-2 3l3 1l-4 3l-4-2l1-2z" fill="#A9A592" stroke="none"/><path d="M1 3h5M2 5.500h4M1 8h5"/><path d="M1.5 15.0v-2M3 12.0h1M5.5 12.5q2.500 0 1.500 2.500h-1.500v-1.500M9 15.0v-2M10.5 12.0h1M13 12.5q2.500 0 1.500 2.500h-1.500v-1.500M16.5 15.0v-2" stroke-width="1"/></g></svg>
<svg style="left:448px;top:113px;filter:drop-shadow(1px 1px 0 #fff);overflow:visible;" width="18" height="17" viewBox="0 0 18 17"><g fill="none" stroke="#A9A592" stroke-width="1.300"><rect x="1" y="1.500" width="15" height="13" rx="2" fill="#A9A592"/><path d="M3 5h11M3 8h5M10 8h4M3 11h8" stroke="#ECE9D8" stroke-width="1.800"/></g></svg>
<svg style="left:471px;top:113px;filter:drop-shadow(1px 1px 0 #fff);overflow:visible;" width="18" height="17" viewBox="0 0 18 17"><g fill="none" stroke="#A9A592" stroke-width="1.300"><path d="M3 3q0-2 3-2h7q3 0 3 2.500t-2 2.500v6q0 3-3 3h-7q-3 0-3-2.500t2-2.500z" fill="#A9A592"/><path d="M6 5h6M6 8h6M5 11.500h6" stroke="#ECE9D8" stroke-width="1.500"/></g></svg>
<div style="left:494px;top:110px;width:2px;height:22px;border-left:1px solid #ACA899;border-right:1px solid #fff;box-sizing:border-box;"></div>
<svg style="left:501px;top:113px;filter:drop-shadow(1px 1px 0 #fff);overflow:visible;" width="18" height="17" viewBox="0 0 18 17"><g fill="none" stroke="#A9A592" stroke-width="1.300"><rect x="1" y="1" width="12" height="11"/><path d="M3 4h8M3 6.500h8M3 9h5"/><rect x="8" y="8" width="8" height="6" fill="#A9A592"/><circle cx="12" cy="11" r="1.800" stroke="#ECE9D8"/></g></svg>
<div style="left:526px;top:110px;width:2px;height:22px;border-left:1px solid #ACA899;border-right:1px solid #fff;box-sizing:border-box;"></div>
<svg style="left:533px;top:113px;filter:drop-shadow(1px 1px 0 #fff);overflow:visible;" width="18" height="17" viewBox="0 0 18 17"><g fill="none" stroke="#A9A592" stroke-width="1.300"><path d="M4 9v-5q0-1.200 1-1.200t1 1.200v-2q0-1.200 1-1.200t1 1.200v-.5q0-1.200 1-1.200t1 1.200v2q0-1.200 1-1.200t1 1.200v6q0 4-4 4t-5-3l-2-3q1-1.500 2 0z" /><path d="M13 9v6M15.500 11v4" stroke-width="1.500"/></g></svg>
<svg style="left:556px;top:113px;filter:drop-shadow(1px 1px 0 #fff);overflow:visible;" width="18" height="17" viewBox="0 0 18 17"><g fill="none" stroke="#A9A592" stroke-width="1.300"><path d="M4 9v-5q0-1.200 1-1.200t1 1.200v-2q0-1.200 1-1.200t1 1.200v-.5q0-1.200 1-1.200t1 1.200v2q0-1.200 1-1.200t1 1.200v6q0 4-4 4t-5-3l-2-3q1-1.500 2 0z" fill="#A9A592"/><path d="M13 9v6M15.500 11v4" stroke-width="1.500"/></g></svg>
<svg style="left:580px;top:115px;" width="14" height="14" viewBox="0 0 14 14"><path d="M1 0.500l12 6.500l-12 6.500z" fill="#A9A592"/></svg>
<div style="left:604px;top:116px;width:12px;height:12px;background:#A9A592;"></div>
<div style="left:627px;top:116px;width:4px;height:12px;background:#A9A592;"></div>
<div style="left:634px;top:116px;width:4px;height:12px;background:#A9A592;"></div>
<svg style="left:649px;top:115px;" width="14" height="14" viewBox="0 0 14 14"><path d="M1 0.500l10 6.500l-10 6.500z" fill="#A9A592"/><rect x="11" y=".5" width="3" height="13" fill="#A9A592"/></svg>
<svg style="left:671px;top:114px;filter:drop-shadow(1px 1px 0 #fff);overflow:visible;" width="15" height="16" viewBox="0 0 15 16"><g fill="none" stroke="#A9A592" stroke-width="1.300"><path d="M3 1v9M6.500 3v6" stroke-width="2"/><path d="M9 6h4v6h-8v-2" /><path d="M11 2v4M13 4v8" stroke-width="1.600"/></g></svg>
<svg style="left:694px;top:114px;filter:drop-shadow(1px 1px 0 #fff);overflow:visible;" width="16" height="16" viewBox="0 0 16 16"><g fill="none" stroke="#A9A592" stroke-width="1.300"><path d="M12 1v9M8.500 3v6" stroke-width="2"/><path d="M2 6h4v6h8v-2"/><path d="M4 2v4M2 4v8" stroke-width="1.600"/><path d="M6 9l4-4" stroke-width="1.600"/></g></svg>
<svg style="left:717px;top:115px;" width="16" height="14" viewBox="0 0 16 14"><path d="M1 0.500l7 6.500l-7 6.500zM8 0.500l7 6.500l-7 6.500z" fill="#A9A592"/></svg>
<svg style="left:741px;top:115px;" width="15" height="14" viewBox="0 0 15 14"><path d="M1 1l9 6l-9 6" fill="none" stroke="#A9A592" stroke-width="3"/><rect x="11" y=".5" width="3.500" height="13" fill="#A9A592"/></svg>
<svg style="left:783px;top:113px;filter:drop-shadow(1px 1px 0 #fff);overflow:visible;" width="16" height="15" viewBox="0 0 16 15"><g fill="none" stroke="#A9A592" stroke-width="1.300"><rect x="1.500" y="4" width="13" height="7" fill="#A9A592" rx="1"/></g></svg>
<svg style="left:806px;top:113px;filter:drop-shadow(1px 1px 0 #fff);overflow:visible;" width="16" height="15" viewBox="0 0 16 15"><g fill="none" stroke="#A9A592" stroke-width="1.300"><rect x="1.500" y="4" width="13" height="7" fill="#A9A592" rx="1"/><path d="M5 5v5M8 5v5M11 5v5" stroke="#ECE9D8"/></g></svg>
<svg style="left:829px;top:113px;filter:drop-shadow(1px 1px 0 #fff);overflow:visible;" width="16" height="15" viewBox="0 0 16 15"><g fill="none" stroke="#A9A592" stroke-width="1.300"><rect x="1.500" y="4" width="13" height="7" fill="#A9A592" rx="1"/><path d="M8 1v3" stroke-width="1.600"/></g></svg>
<svg style="left:852px;top:113px;filter:drop-shadow(1px 1px 0 #fff);overflow:visible;" width="16" height="15" viewBox="0 0 16 15"><g fill="none" stroke="#A9A592" stroke-width="1.300"><rect x="1.500" y="4" width="13" height="7" fill="#A9A592" rx="1"/><path d="M4 13h8M8 11v2" stroke-width="1.400"/></g></svg>
<svg style="left:874px;top:113px;filter:drop-shadow(1px 1px 0 #fff);overflow:visible;" width="18" height="16" viewBox="0 0 18 16"><g fill="none" stroke="#A9A592" stroke-width="1.300"><path stroke-width="1.400" d="M1 3h14M4 1v4M12 1v4M8 3v8M4 11h8" /></g></svg>
<svg style="left:897px;top:113px;filter:drop-shadow(1px 1px 0 #fff);overflow:visible;" width="18" height="16" viewBox="0 0 18 16"><g fill="none" stroke="#A9A592" stroke-width="1.300"><path stroke-width="1.400" d="M1 3h16M4 1v4M14 1v4M3 9h12M6 3v6M12 3v6M1 13h16"/></g></svg>
<svg style="left:920px;top:113px;filter:drop-shadow(1px 1px 0 #fff);overflow:visible;" width="18" height="16" viewBox="0 0 18 16"><g fill="none" stroke="#A9A592" stroke-width="1.300"><path stroke-width="1.400" d="M1 6h16M4 1v5M14 1v5M9 6v6M2 12h14M5 10v4M13 10v4"/></g></svg>
<svg style="left:943px;top:113px;filter:drop-shadow(1px 1px 0 #fff);overflow:visible;" width="18" height="16" viewBox="0 0 18 16"><g fill="none" stroke="#A9A592" stroke-width="1.300"><path stroke-width="1.400" d="M1 12h16M9 3v9M5 3h8M4 8h10M5 12v3M9 12v3M13 12v3"/></g></svg>
<svg style="left:966px;top:113px;filter:drop-shadow(1px 1px 0 #fff);overflow:visible;" width="18" height="16" viewBox="0 0 18 16"><g fill="none" stroke="#A9A592" stroke-width="1.300"><path stroke-width="1.400" d="M1 3h16M4 1v4M9 1v4M14 1v4M9 5v7M4 8h10M5 12h8"/></g></svg>
<div style="left:990px;top:110px;width:2px;height:22px;border-left:1px solid #ACA899;border-right:1px solid #fff;box-sizing:border-box;"></div>
<svg style="left:999px;top:113px;filter:drop-shadow(1px 1px 0 #fff);overflow:visible;" width="14" height="14" viewBox="0 0 14 14"><g fill="none" stroke="#A9A592" stroke-width="1.300"><path d="M1 3h6v8h6" stroke-width="1.500"/></g></svg>
<div style="left:130px;top:45px;width:268px;height:648px;background:#fff;border:1px solid #8f8c80;box-sizing:border-box;box-shadow:2px 2px 2px rgba(0,0,0,.5);"></div>
<span id="t149" class="t" style="left:156px;top:51px;font-size:12px;line-height:14px;">変数<span class="h" style="transform:scale(0.898,1.22);margin-right:-3.06px">ﾃｰﾌﾞﾙ</span>(<u>B</u>)</span>
<svg style="left:386px;top:54px;" width="5" height="8" viewBox="0 0 5 8"><path d="M0.500 0.500l4 3.500l-4 3.500z" fill="#000"/></svg>
<span id="t150" class="t" style="left:156px;top:71px;font-size:12px;line-height:14px;"><span class="h" style="transform:scale(0.930,1.22);margin-right:-1.68px">ﾗﾀﾞｰ</span>回路(<u>D</u>)</span>
<span id="t151" class="t" style="left:342px;top:71px;font-size:12px;line-height:14px;letter-spacing:0.06px;">Alt+D</span>
<div style="left:155px;top:88px;width:240px;height:20px;background:#316AC5;"></div>
<div style="left:133px;top:88px;width:20px;height:20px;border-top:1px solid #fff;border-left:1px solid #fff;border-right:1px solid #ACA899;border-bottom:1px solid #ACA899;box-sizing:border-box;"></div>
<span id="t152" class="t" style="left:156px;top:91px;font-size:12px;line-height:14px;color:#fff;"><span class="h" style="transform:scale(1.033,1.22);margin-right:0.99px">ﾆﾓﾆｯｸ</span>(<u>M</u>)</span>
<span id="t153" class="t" style="left:342px;top:91px;font-size:12px;line-height:14px;color:#fff;letter-spacing:-0.20px;">Alt+M</span>
<span id="t154" class="t" style="left:156px;top:111px;font-size:12px;line-height:14px;"><span class="h" style="transform:scale(1.099,1.22);margin-right:8.32px">ｸﾛｽﾘﾌｧﾚﾝｽﾚﾎﾟｰﾄ</span>(<u>C</u>)</span>
<span id="t155" class="t" style="left:343px;top:111px;font-size:12px;line-height:14px;">Alt+X</span>
<span id="t156" class="t" style="left:156px;top:131px;font-size:12px;line-height:14px;"><span class="h" style="transform:scale(0.887,1.22);margin-right:-2.03px">ﾒﾓﾘ</span>表示(<u>E</u>)</span>
<div style="left:133px;top:151px;width:260px;height:1px;background:#ACA899;"></div>
<span id="t157" class="t" style="left:156px;top:160px;font-size:12px;line-height:14px;color:#ACA899;letter-spacing:0.24px;">下<span class="k" style="transform:scaleX(0.700);margin-right:-3.60px">の</span>階層<span class="k" style="transform:scaleX(0.700);margin-right:-3.60px">へ</span>(<u>L</u>)</span>
<span id="t158" class="t" style="left:333px;top:160px;font-size:12px;line-height:14px;color:#ACA899;letter-spacing:0.09px;">Shift+F</span>
<span id="t159" class="t" style="left:156px;top:180px;font-size:12px;line-height:14px;color:#ACA899;letter-spacing:0.19px;">上<span class="k" style="transform:scaleX(0.700);margin-right:-3.60px">の</span>階層<span class="k" style="transform:scaleX(0.700);margin-right:-3.60px">へ</span>(<u>Y</u>)</span>
<span id="t160" class="t" style="left:156px;top:200px;font-size:12px;line-height:14px;color:#ACA899;">FB<span class="h" style="transform:scale(0.943,1.22);margin-right:-1.03px">ﾓﾆﾀ</span>(<u>R</u>)</span>
<div style="left:133px;top:220px;width:260px;height:1px;background:#ACA899;"></div>
<span id="t161" class="t" style="left:156px;top:229px;font-size:12px;line-height:14px;color:#ACA899;letter-spacing:0.20px;">使用/未使用状況<span class="k" style="transform:scaleX(0.700);margin-right:-3.60px">の</span>確認(<u>U</u>)</span>
<div style="left:133px;top:249px;width:260px;height:1px;background:#ACA899;"></div>
<span id="t162" class="t" style="left:156px;top:258px;font-size:12px;line-height:14px;">注釈文<span class="h" style="transform:scale(1.108,1.22);margin-right:1.94px">ﾘｽﾄ</span><span class="k" style="transform:scaleX(0.750);margin-right:-3.00px">の</span>表示(<u>A</u>)</span>
<span id="t163" class="t" style="left:342px;top:258px;font-size:12px;line-height:14px;letter-spacing:0.20px;">Alt+A</span>
<span id="t164" class="t" style="left:156px;top:278px;font-size:12px;line-height:14px;">I/O<span class="h" style="transform:scale(0.997,1.22);margin-right:-0.07px">ｺﾒﾝﾄ</span><span class="k" style="transform:scaleX(0.750);margin-right:-3.00px">の</span>表示(<u>Y</u>)</span>
<span id="t165" class="t" style="left:343px;top:278px;font-size:12px;line-height:14px;">Alt+Y</span>
<span id="t166" class="t" style="left:156px;top:298px;font-size:12px;line-height:14px;"><span class="h" style="transform:scale(1.048,1.22);margin-right:2.02px">ﾌﾟﾛｸﾞﾗﾑ</span>/<span class="h" style="transform:scale(1.048,1.22);margin-right:2.59px">ｾｸｼｮﾝｺﾒﾝﾄ</span><span class="k" style="transform:scaleX(0.750);margin-right:-3.00px">の</span>表示(<u>P</u>)</span>
<span id="t167" class="t" style="left:342px;top:298px;font-size:12px;line-height:14px;letter-spacing:-0.07px;">Alt+O</span>
<span id="t168" class="t" style="left:156px;top:318px;font-size:12px;line-height:14px;color:#ACA899;letter-spacing:-0.22px;">回路折<span class="k" style="transform:scaleX(0.700);margin-right:-3.60px">り</span>返<span class="k" style="transform:scaleX(0.700);margin-right:-3.60px">し</span>(<u>R</u>)</span>
<span id="t169" class="t" style="left:156px;top:338px;font-size:12px;line-height:14px;"><span class="h" style="transform:scale(1.075,1.22);margin-right:6.30px">ﾏﾙﾁｲﾝﾀｰﾛｯｸﾏｯﾌﾟ</span>(<u>U</u>)</span>
<div style="left:133px;top:358px;width:260px;height:1px;background:#ACA899;"></div>
<span id="t170" class="t" style="left:156px;top:367px;font-size:12px;line-height:14px;"><span class="h" style="transform:scale(1.054,1.22);margin-right:0.97px">ﾓﾆﾀ</span>表示書式</span>
<svg style="left:386px;top:370px;" width="5" height="8" viewBox="0 0 5 8"><path d="M0.500 0.500l4 3.500l-4 3.500z" fill="#000"/></svg>
<div style="left:133px;top:387px;width:260px;height:1px;background:#ACA899;"></div>
<span id="t171" class="t" style="left:156px;top:396px;font-size:12px;line-height:14px;"><span class="h" style="transform:scale(1.046,1.22);margin-right:1.66px">ﾂｰﾙﾊﾞｰ</span>(<u>T</u>)...</span>
<span id="t172" class="t" style="left:156px;top:416px;font-size:12px;line-height:14px;"><span class="h" style="transform:scale(0.935,1.22);margin-right:-2.34px">ｳｨﾝﾄﾞｳ</span>(<u>W</u>)</span>
<svg style="left:386px;top:419px;" width="5" height="8" viewBox="0 0 5 8"><path d="M0.500 0.500l4 3.500l-4 3.500z" fill="#000"/></svg>
<span id="t173" class="t" style="left:156px;top:436px;font-size:12px;line-height:14px;"><span class="h" style="transform:scale(1.104,1.22);margin-right:4.99px">ｽﾃｰﾀｽﾊﾞｰ</span>(<u>S</u>)</span>
<span id="t174" class="t" style="left:156px;top:456px;font-size:12px;line-height:14px;color:#ACA899;"><span class="h" style="transform:scale(1.062,1.22);margin-right:5.95px">ﾌｧﾝｸｼｮﾝｷｰｶﾞｲﾀﾞﾝｽ</span></span>
<span id="t175" class="t" style="left:308px;top:456px;font-size:12px;line-height:14px;color:#ACA899;">Ctrl+Shift+F</span>
<span id="t176" class="t" style="left:156px;top:476px;font-size:12px;line-height:14px;"><span class="h" style="transform:scale(1.066,1.22);margin-right:5.94px">ｲﾝﾌｫﾒｰｼｮﾝｳｨﾝﾄﾞｳ</span></span>
<span id="t177" class="t" style="left:312px;top:476px;font-size:12px;line-height:14px;">Ctrl+Shift+I</span>
<div style="left:133px;top:496px;width:260px;height:1px;background:#ACA899;"></div>
<span id="t178" class="t" style="left:156px;top:505px;font-size:12px;line-height:14px;"><span class="h" style="transform:scale(1.096,1.22);margin-right:2.30px">ｱｲｺﾝ</span><span class="k" style="transform:scaleX(0.750);margin-right:-3.00px">の</span>整列(<u>H</u>)</span>
<svg style="left:386px;top:508px;" width="5" height="8" viewBox="0 0 5 8"><path d="M0.500 0.500l4 3.500l-4 3.500z" fill="#000"/></svg>
<div style="left:133px;top:525px;width:260px;height:1px;background:#ACA899;"></div>
<span id="t179" class="t" style="left:156px;top:534px;font-size:12px;line-height:14px;color:#ACA899;"><span class="h" style="transform:scale(0.960,1.22);margin-right:-1.68px">ﾓﾆﾀﾘﾝｸﾞ</span>(<u>N</u>)</span>
<span id="t180" class="t" style="left:156px;top:554px;font-size:12px;line-height:14px;color:#ACA899;letter-spacing:-0.99px;"><span class="h" style="transform:scale(0.850,1.22);margin-right:-5.40px">ｸﾞﾘｯﾄﾞ</span>(<u>G</u>)</span>
<span id="t181" class="t" style="left:362px;top:554px;font-size:12px;line-height:14px;color:#ACA899;letter-spacing:0.66px;">G</span>
<div style="left:133px;top:574px;width:260px;height:1px;background:#ACA899;"></div>
<span id="t182" class="t" style="left:156px;top:583px;font-size:12px;line-height:14px;color:#ACA899;letter-spacing:-0.27px;">拡大(<u>I</u>)</span>
<span id="t183" class="t" style="left:323px;top:583px;font-size:12px;line-height:14px;color:#ACA899;">Alt+Right</span>
<span id="t184" class="t" style="left:156px;top:603px;font-size:12px;line-height:14px;color:#ACA899;letter-spacing:-0.27px;">縮小(<u>Z</u>)</span>
<span id="t185" class="t" style="left:330px;top:603px;font-size:12px;line-height:14px;color:#ACA899;letter-spacing:0.12px;">Alt+Left</span>
<span id="t186" class="t" style="left:156px;top:623px;font-size:12px;line-height:14px;color:#ACA899;"><span class="h" style="transform:scale(1.044,1.22);margin-right:1.58px">ｳｨﾝﾄﾞｳ</span>幅<span class="k" style="transform:scaleX(0.750);margin-right:-3.00px">に</span>合<span class="k" style="transform:scaleX(0.750);margin-right:-9.00px">わせる</span>(<u>F</u>)</span>
<span id="t187" class="t" style="left:336px;top:623px;font-size:12px;line-height:14px;color:#ACA899;letter-spacing:-0.06px;">Alt+Up</span>
<span id="t188" class="t" style="left:156px;top:643px;font-size:12px;line-height:14px;color:#ACA899;"><span class="h" style="transform:scale(1.069,1.22);margin-right:3.31px">ｽﾞｰﾑﾘｾｯﾄ</span>(<u>R</u>)</span>
<span id="t189" class="t" style="left:321px;top:643px;font-size:12px;line-height:14px;color:#ACA899;letter-spacing:-0.09px;">Alt+Down</span>
<div style="left:133px;top:663px;width:260px;height:1px;background:#ACA899;"></div>
<span id="t190" class="t" style="left:156px;top:672px;font-size:12px;line-height:14px;"><span class="h" style="transform:scale(0.896,1.22);margin-right:-4.37px">ﾌﾟﾛﾊﾟﾃｨ</span>(<u>O</u>)</span>
<span id="t191" class="t" style="left:323px;top:672px;font-size:12px;line-height:14px;letter-spacing:-0.08px;">Alt+Enter</span>
<svg style="left:136px;top:70px;" width="16" height="15" viewBox="0 0 16 15"><path d="M1 1h13.500v7.500l-3 3h-2l-2 2.500h-6.500z" fill="#fff" stroke="#000" stroke-width="1.400"/><path d="M4.500 1v12M4.500 5.500h3v-3M11.500 2v3.500h-2.500" fill="none" stroke="#000" stroke-width="1.300"/></svg>
<svg style="left:137px;top:90px;" width="16" height="15" viewBox="0 0 16 15"><rect x=".7" y=".7" width="14" height="13.300" fill="#fff" stroke="#000" stroke-width="1.400"/><path d="M1 3h14" stroke="#000" stroke-width="1"/><rect x="3.500" y="5" width="8" height="2.600" fill="#fff" stroke="#101070" stroke-width="1.200"/><path d="M3 10h3M7 10h2M10 10h2M3 12h3M7 12h2M10 12h2" stroke="#b8b088" stroke-width="1"/></svg>
<svg style="left:136px;top:111px;" width="17" height="15" viewBox="0 0 17 15"><rect x=".7" y="7" width="6" height="6.500" fill="#fff" stroke="#000" stroke-width="1.400"/><rect x="9.500" y="7" width="6" height="6.500" fill="#fff" stroke="#000" stroke-width="1.400"/><path d="M3.500 7q0-3 4.500-3t4.500 3M4 1l3 3.500M12 1l-3 3.500" fill="none" stroke="#000" stroke-width="1.300"/></svg>
<svg style="left:137px;top:158px;" width="16" height="16" viewBox="0 0 16 16"><path d="M1 1h5l2 3l3-2v3h3M9 8h5M9 11h5" fill="none" stroke="#A9A592" stroke-width="1"/><path d="M1 1h4l3 4l3-2v11h-8v-2h-2l2-3h-2z" fill="#A9A592"/></svg>
<svg style="left:137px;top:178px;" width="16" height="16" viewBox="0 0 16 16"><path d="M9 8h5M9 11h5" fill="none" stroke="#A9A592" stroke-width="1"/><path d="M5.500 1l5 5h-2v2l3-2v9h-8v-3h-2.500l2.500-3v-3h-3z" fill="#A9A592"/></svg>
<svg style="left:136px;top:199px;" width="17" height="15" viewBox="0 0 17 15"><path d="M9 1l6 .5l-1 3l2 1l-4 4l-4-2l2-2.500z" fill="#A9A592"/><path d="M3 1h4M4 1v7M2 3.500h5M1 6h6M3 8l-1.500 2M6 8l1.500 2" stroke="#A9A592" fill="none"/><g fill="none" stroke="#8a8678"><path d="M1.5 15.0v-2M3 12.0h1M5.5 12.5q2.500 0 1.500 2.500h-1.500v-1.500M9 15.0v-2M10.5 12.0h1M13 12.5q2.500 0 1.500 2.500h-1.500v-1.500M16.5 15.0v-2" stroke-width="1"/></g></svg>
<div style="left:134px;top:255px;width:19px;height:18px;background:repeating-conic-gradient(#fff 0 25%,#F1EFE6 0 50%) 0 0/2px 2px;border-top:1px solid #ACA899;border-left:1px solid #ACA899;box-sizing:border-box;"></div>
<div style="left:134px;top:275px;width:19px;height:18px;background:repeating-conic-gradient(#fff 0 25%,#F1EFE6 0 50%) 0 0/2px 2px;border-top:1px solid #ACA899;border-left:1px solid #ACA899;box-sizing:border-box;"></div>
<div style="left:134px;top:295px;width:19px;height:18px;background:repeating-conic-gradient(#fff 0 25%,#F1EFE6 0 50%) 0 0/2px 2px;border-top:1px solid #ACA899;border-left:1px solid #ACA899;box-sizing:border-box;"></div>
<div style="left:134px;top:433px;width:19px;height:18px;background:repeating-conic-gradient(#fff 0 25%,#F1EFE6 0 50%) 0 0/2px 2px;border-top:1px solid #ACA899;border-left:1px solid #ACA899;box-sizing:border-box;"></div>
<svg style="left:136px;top:258px;" width="17" height="14" viewBox="0 0 17 14"><path d="M2.500 1.0l1.500 1.500l-1.500 1.500l-1.500-1.500z" fill="#101090"/><path d="M6 2.0h9M6 3.5h7" stroke="#b0ac9c" stroke-width="1"/><path d="M2.500 5.5l1.500 1.500l-1.500 1.500l-1.500-1.500z" fill="#101090"/><path d="M6 6.5h9M6 8.0h7" stroke="#b0ac9c" stroke-width="1"/><path d="M2.500 10.0l1.500 1.500l-1.500 1.500l-1.500-1.500z" fill="#101090"/><path d="M6 11.0h9M6 12.5h7" stroke="#b0ac9c" stroke-width="1"/></svg>
<svg style="left:136px;top:276px;" width="17" height="17" viewBox="0 0 17 17"><path d="M5 1.500h8q3 0 3 2.500t-3 3h-1l1.500 3l-4-3h-4q-3 0-3-2.700t2.500-2.800z" fill="#fff" stroke="#000" stroke-width="1.100"/><path d="M6 3.500l1 2l1-2l1 2l1-2" fill="none" stroke="#000" stroke-width=".8"/><rect x="1" y="10" width="10" height="5" rx="1.500" fill="#f0ec70" stroke="#8a8a20"/><path d="M11 12.500h2.500v-2" fill="none" stroke="#000"/></svg>
<svg style="left:136px;top:297px;" width="17" height="15" viewBox="0 0 17 15"><rect x="0" y="0" width="2.500" height="15" fill="#109010"/><rect x="4" y="1" width="12" height="13" fill="#f8f020"/><path d="M4 1.500h12M4 6h12M4 10h12M4 14h12" stroke="#000" stroke-width="1.300" stroke-dasharray="2 1"/><path d="M4.500 1v13M15.500 1v13" stroke="#000" stroke-width="1" stroke-dasharray="3 1.500"/></svg>
<svg style="left:137px;top:317px;" width="16" height="15" viewBox="0 0 16 15"><path d="M1 1v13M15 1v13" stroke="#A9A592" stroke-width="2"/><path d="M1 3.500h4M7 3.500h8M5 1v5M7 1v5M1 11h3M12 11h3M10 3.500v3h-4v2" fill="none" stroke="#A9A592" stroke-width="1.300"/><circle cx="6" cy="11" r="2" fill="none" stroke="#A9A592" stroke-width="1.300"/><circle cx="10.500" cy="11" r="2" fill="none" stroke="#A9A592" stroke-width="1.300"/></svg>
<svg style="left:137px;top:338px;" width="16" height="15" viewBox="0 0 16 15"><path d="M2 1v12.500h4M2 7h3" fill="none" stroke="#000" stroke-width="1.300"/><rect x="1" y=".7" width="8" height="3" fill="#20c040" stroke="#000" stroke-width=".9"/><rect x="6" y="5.500" width="8" height="3" fill="#20c040" stroke="#000" stroke-width=".9"/><rect x="7" y="11" width="8" height="3" fill="#20c040" stroke="#000" stroke-width=".9"/></svg>
<svg style="left:139px;top:438px;" width="10" height="9" viewBox="0 0 10 9"><path d="M1.500 4l2.500 3l4.500-5.500" fill="none" stroke="#000" stroke-width="2"/></svg>
<svg style="left:136px;top:533px;" width="17" height="15" viewBox="0 0 17 15"><rect x="1.500" y="1" width="8" height="7" fill="none" stroke="#A9A592" stroke-width="1.200"/><path d="M8 1l5 .5l-1 2.500l2 1l-3.500 3l-3-1.500l1.500-2z" fill="#8a8678"/><g fill="none" stroke="#8a8678"><path d="M1.5 15.0v-2M3 12.0h1M5.5 12.5q2.500 0 1.500 2.500h-1.500v-1.500M9 15.0v-2M10.5 12.0h1M13 12.5q2.500 0 1.500 2.500h-1.500v-1.500M16.5 15.0v-2" stroke-width="1"/></g></svg>
<div style="left:137px;top:554px;width:1px;height:1px;background:#b8b4a4;"></div>
<div style="left:137px;top:557px;width:1px;height:1px;background:#b8b4a4;"></div>
<div style="left:137px;top:560px;width:1px;height:1px;background:#b8b4a4;"></div>
<div style="left:137px;top:563px;width:1px;height:1px;background:#b8b4a4;"></div>
<div style="left:137px;top:566px;width:1px;height:1px;background:#b8b4a4;"></div>
<div style="left:140px;top:554px;width:1px;height:1px;background:#b8b4a4;"></div>
<div style="left:140px;top:557px;width:1px;height:1px;background:#b8b4a4;"></div>
<div style="left:140px;top:560px;width:1px;height:1px;background:#b8b4a4;"></div>
<div style="left:140px;top:563px;width:1px;height:1px;background:#b8b4a4;"></div>
<div style="left:140px;top:566px;width:1px;height:1px;background:#b8b4a4;"></div>
<div style="left:143px;top:554px;width:1px;height:1px;background:#b8b4a4;"></div>
<div style="left:143px;top:557px;width:1px;height:1px;background:#b8b4a4;"></div>
<div style="left:143px;top:560px;width:1px;height:1px;background:#b8b4a4;"></div>
<div style="left:143px;top:563px;width:1px;height:1px;background:#b8b4a4;"></div>
<div style="left:143px;top:566px;width:1px;height:1px;background:#b8b4a4;"></div>
<div style="left:146px;top:554px;width:1px;height:1px;background:#b8b4a4;"></div>
<div style="left:146px;top:557px;width:1px;height:1px;background:#b8b4a4;"></div>
<div style="left:146px;top:560px;width:1px;height:1px;background:#b8b4a4;"></div>
<div style="left:146px;top:563px;width:1px;height:1px;background:#b8b4a4;"></div>
<div style="left:146px;top:566px;width:1px;height:1px;background:#b8b4a4;"></div>
<div style="left:149px;top:554px;width:1px;height:1px;background:#b8b4a4;"></div>
<div style="left:149px;top:557px;width:1px;height:1px;background:#b8b4a4;"></div>
<div style="left:149px;top:560px;width:1px;height:1px;background:#b8b4a4;"></div>
<div style="left:149px;top:563px;width:1px;height:1px;background:#b8b4a4;"></div>
<div style="left:149px;top:566px;width:1px;height:1px;background:#b8b4a4;"></div>
<svg style="left:136px;top:581px;" width="18" height="18" viewBox="0 0 18 18"><circle cx="7.0" cy="7.0" r="5.5" fill="none" stroke="#A9A592" stroke-width="1.400"/><path d="M11.5 11.5l5.5 5.5" stroke="#A9A592" stroke-width="2"/></svg>
<svg style="left:140px;top:605px;" width="12" height="12" viewBox="0 0 12 12"><circle cx="4" cy="4" r="2.600" fill="none" stroke="#A9A592" stroke-width="1.200"/><path d="M6 6l3 3.500" stroke="#A9A592" stroke-width="1.500"/></svg>
<svg style="left:136px;top:621px;" width="18" height="18" viewBox="0 0 18 18"><circle cx="5.5" cy="5.5" r="4" fill="none" stroke="#A9A592" stroke-width="1.400"/><path d="M8.5 8.5l7 7" stroke="#A9A592" stroke-width="2"/><path d="M16 1l-11 15" stroke="#A9A592" stroke-width="1.800"/><path d="M2 9l3 5l2.500-3.500" fill="none" stroke="#A9A592" stroke-width="1.200"/></svg>
<svg style="left:136px;top:641px;" width="18" height="18" viewBox="0 0 18 18"><circle cx="5.5" cy="5.5" r="4" fill="none" stroke="#A9A592" stroke-width="1.400"/><path d="M8.5 8.5l7 7" stroke="#A9A592" stroke-width="2"/></svg>
<svg style="left:136px;top:671px;" width="17" height="16" viewBox="0 0 17 16"><path d="M1 6h11v9h-11z" fill="#fff" stroke="#000" stroke-width="1.400"/><path d="M3 9h7M3 11.500h7" stroke="#000" stroke-width="1"/><path d="M3 6l4-3.500l3.500 3.500" fill="#fff" stroke="#000" stroke-width="1.200"/><path d="M12 1h4v5h-1.500v-2.500h-2.500z" fill="#1010a0"/></svg>
</body></html>
